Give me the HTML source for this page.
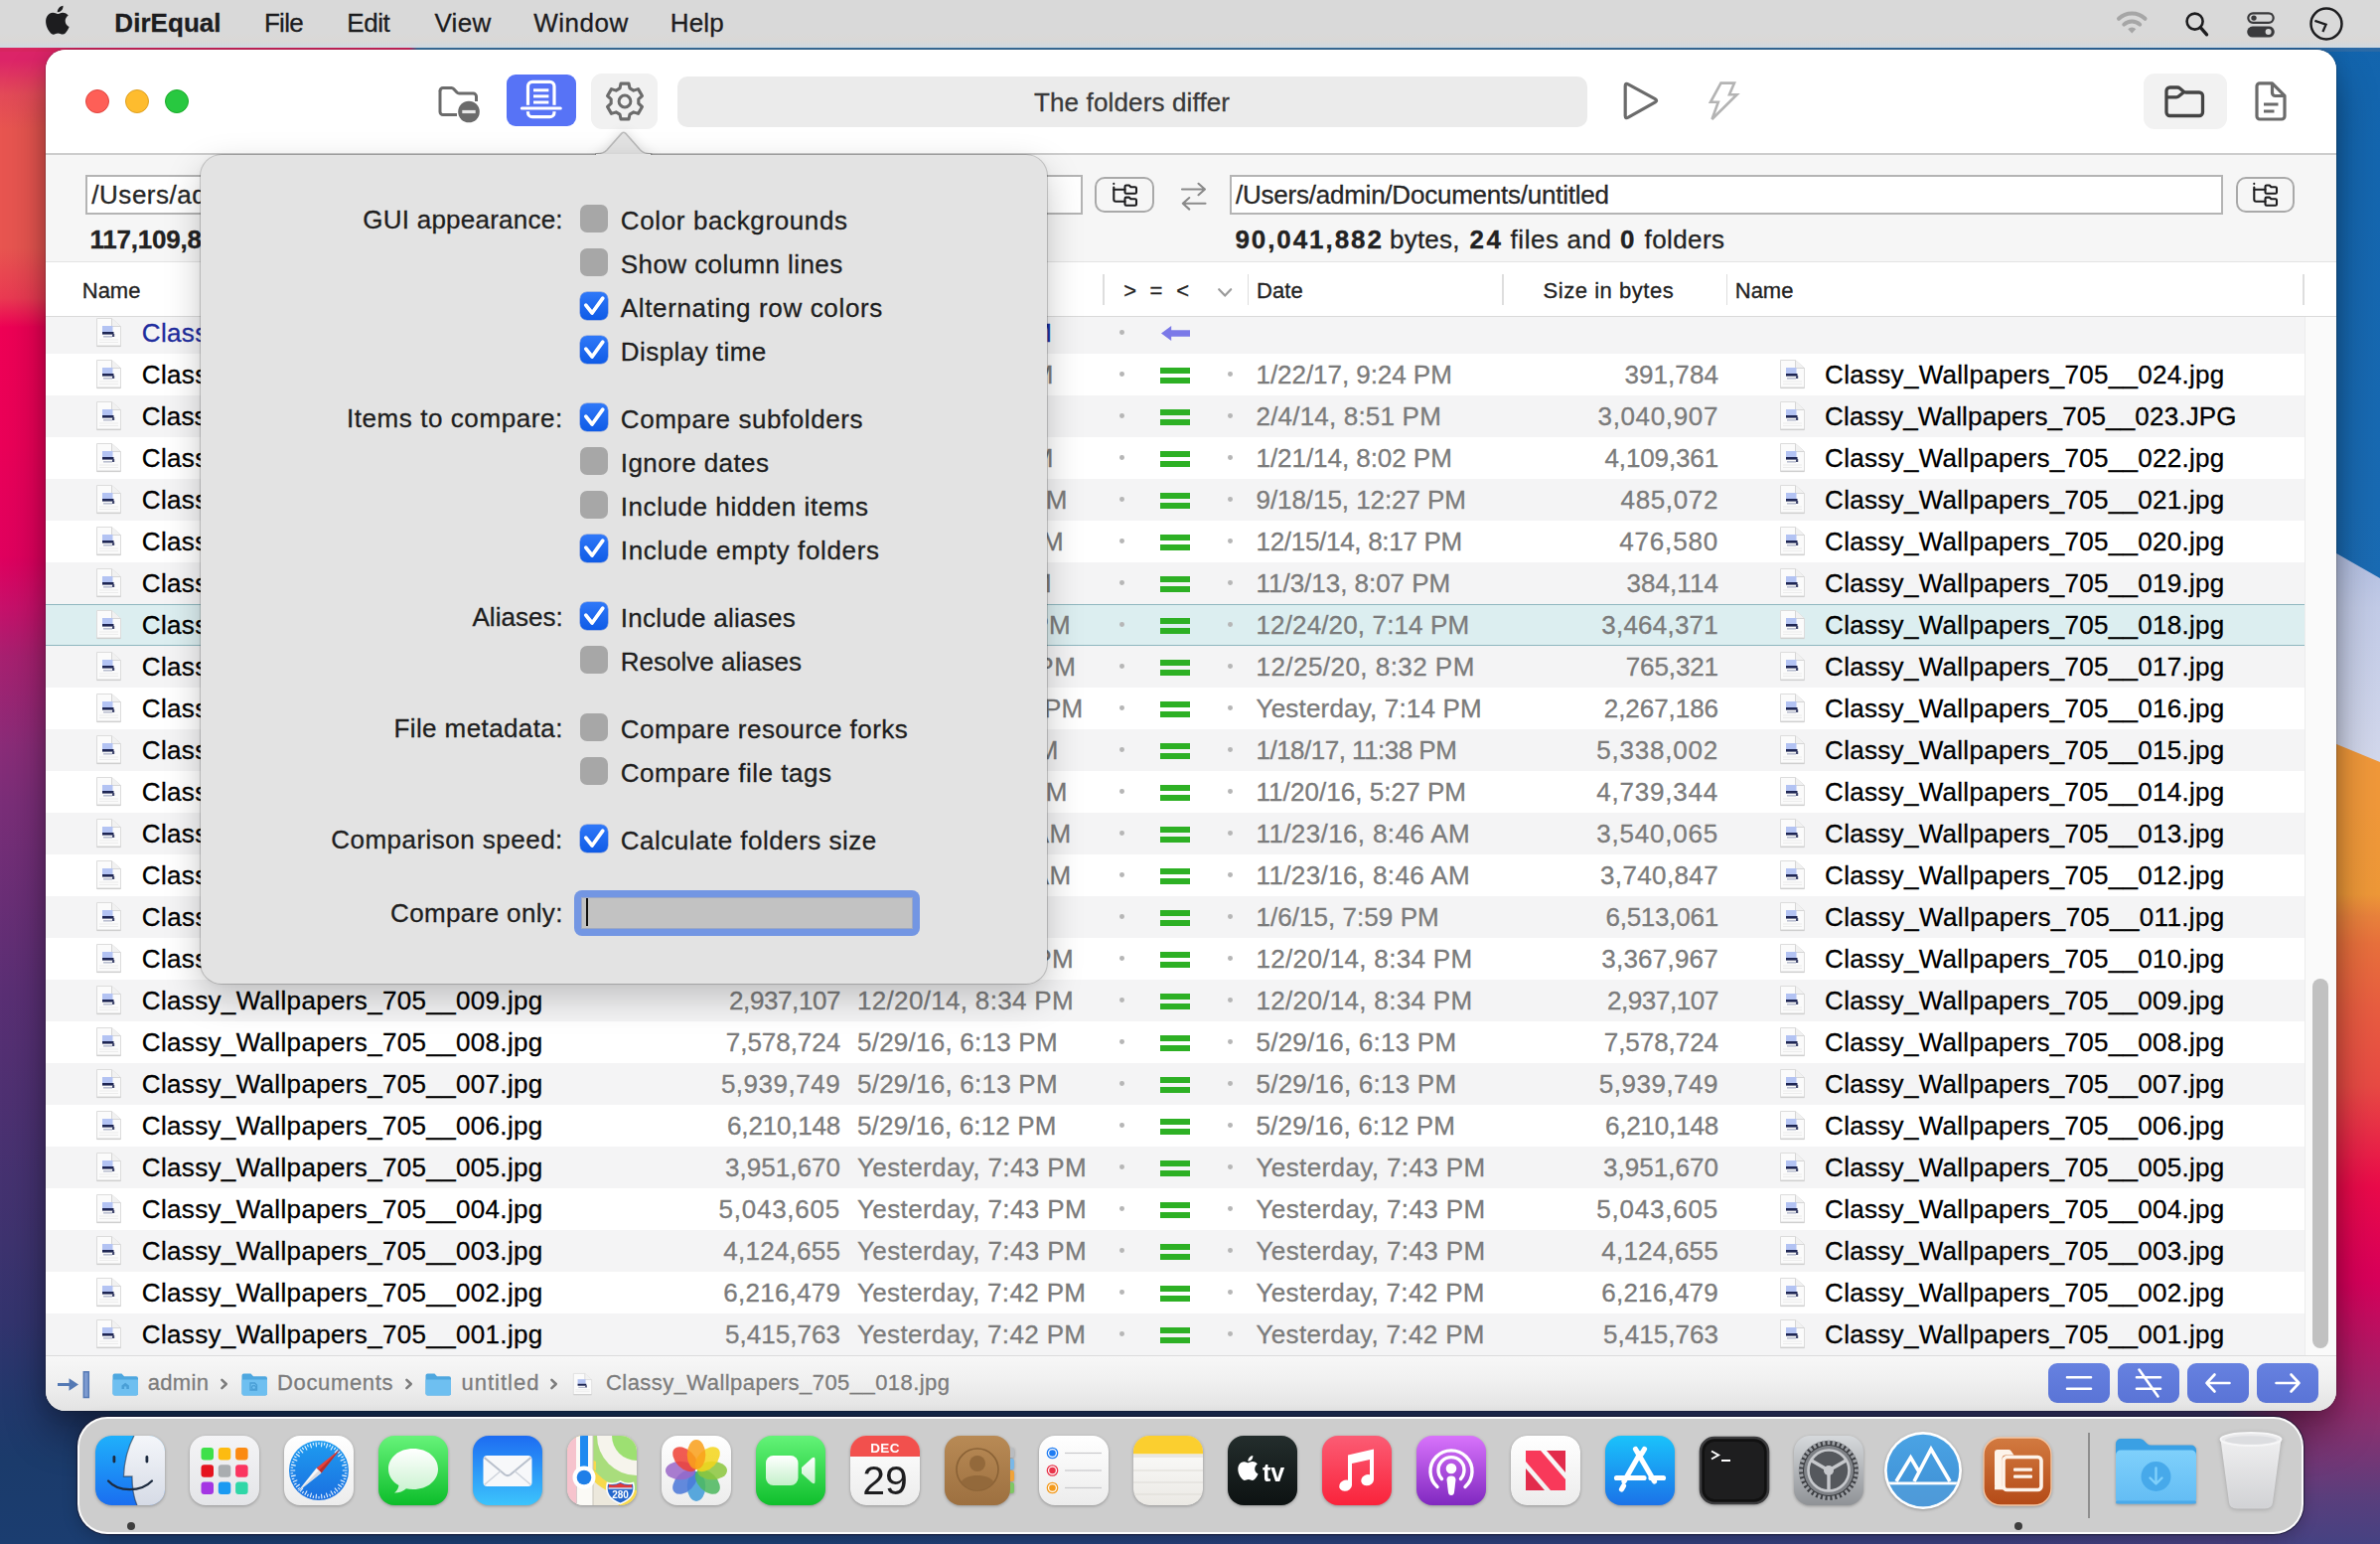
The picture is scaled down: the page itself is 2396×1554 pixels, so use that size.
<!DOCTYPE html><html><head><meta charset="utf-8"><title>DirEqual</title><style>
html,body{margin:0;padding:0}
body{width:2396px;height:1554px;overflow:hidden;position:relative;background:#1d3c6e;font-family:"Liberation Sans",sans-serif;}
.a{position:absolute;box-sizing:border-box}
.t{position:absolute;white-space:pre;font-family:"Liberation Sans",sans-serif;-webkit-text-stroke:0.3px currentColor}
svg{overflow:visible}
</style></head><body><div class="a" style="left:0px;top:1380px;width:2396px;height:174px;background:linear-gradient(90deg,#1b3a6b 0%,#1c3f73 30%,#2a3e78 60%,#3a3e7c 82%,#4a3f7e 96%,#4a4080 100%);"></div><div class="a" style="left:0px;top:0px;width:110px;height:1554px;background:linear-gradient(180deg,#dc2468 0px,#dc2468 60px,#e34a58 95px,#e85550 130px,#e85550 250px,#ea3a52 300px,#ee0055 330px,#ea0058 450px,#e0005e 560px,#c8106a 610px,#a82070 660px,#8a2c78 750px,#7a2e78 810px,#5a2f74 1000px,#3e336f 1250px,#33346e 1330px,#22386c 1410px,#1b3b6b 1470px,#1b3d70 1554px);"></div><div class="a" style="left:2240px;top:0px;width:156px;height:1554px;-webkit-mask-image:linear-gradient(90deg,transparent 0,#000 70px);mask-image:linear-gradient(90deg,transparent 0,#000 70px);background:linear-gradient(180deg,#f0983a 0px,#f0983a 810px,#ee9838 900px,#e9823c 922px,#e8703c 950px,#e85e40 1010px,#e84a44 1093px,#ea0a4a 1195px,#d8005a 1288px,#b01864 1361px,#8a3070 1434px,#5a3e7c 1507px,#454282 1554px);"></div><svg class="a" style="left:2240px;top:0px;-webkit-mask-image:linear-gradient(90deg,transparent 0,#000 70px);mask-image:linear-gradient(90deg,transparent 0,#000 70px);" width="156" height="800" viewBox="0 0 156 800"><defs><linearGradient id="gWB" x1="0" y1="0" x2="0" y2="1"><stop offset="0" stop-color="#1264ad"/><stop offset="1" stop-color="#1a6bb3"/></linearGradient><linearGradient id="gWP" x1="0" y1="0" x2="0" y2="1"><stop offset="0" stop-color="#9fb0db"/><stop offset=".45" stop-color="#c2cbe7"/><stop offset="1" stop-color="#d3d8ec"/></linearGradient></defs><polygon points="0,703 156,767 156,575 0,486" fill="url(#gWP)"/><polygon points="0,0 156,0 156,582 0,493" fill="url(#gWB)"/></svg><div class="a" style="left:0px;top:46px;width:2396px;height:6px;background:linear-gradient(90deg,#d82560 0px,#d82560 412px,#3f78a8 420px,#3f78a8 1500px,#2b6aa6 2396px);"></div><div class="a" id="win" style="left:46px;top:50px;width:2306px;height:1370px;border-radius:20px;background:#f6f6f6;box-shadow:0 0 0 1px rgba(0,0,0,.15),0 24px 44px -4px rgba(0,0,0,.45),0 0 18px rgba(0,0,0,.12);overflow:hidden"><div class="a" style="left:0px;top:0px;width:2306px;height:105.5px;background:#fff;border-bottom:2px solid #cdcdcd;"></div><div class="a" style="left:40px;top:40px;width:24px;height:24px;border-radius:50%;background:#fe5f57;border:1px solid #e0443e;"></div><div class="a" style="left:80px;top:40px;width:24px;height:24px;border-radius:50%;background:#febc2e;border:1px solid #dea123;"></div><div class="a" style="left:120px;top:40px;width:24px;height:24px;border-radius:50%;background:#28c840;border:1px solid #1aab29;"></div><svg class="a" style="left:394.5px;top:34.5px;" width="43" height="40" viewBox="0 0 43 40"><path d="M2 6.5 a3 3 0 0 1 3 -3 h8.5 a3 3 0 0 1 2.2 1 l3.3 3.6 a3 3 0 0 0 2.2 1 h14.3 a3 3 0 0 1 3 3 v5" fill="none" stroke="#6b6b6b" stroke-width="3"/><path d="M2 6 v21.5 a3 3 0 0 0 3 3 h14" fill="none" stroke="#6b6b6b" stroke-width="3"/><circle cx="31" cy="27.5" r="10.8" fill="#6b6b6b"/><rect x="24.3" y="25.9" width="13.4" height="3.2" fill="#e8e8e8"/></svg><div class="a" style="left:463.8px;top:25px;width:70px;height:51.6px;border-radius:9px;background:#5773f6;"></div><svg class="a" style="left:477.3px;top:30.2px;" width="44" height="40" viewBox="0 0 44 40"><rect x="8.5" y="2.3" width="26.5" height="35.4" rx="4.5" fill="none" stroke="#fff" stroke-width="3.2"/><rect x="14" y="9.3" width="15.4" height="3" fill="#fff"/><rect x="14" y="15.4" width="15.4" height="3" fill="#fff"/><rect x="14" y="21.5" width="15.4" height="3" fill="#fff"/><rect x="5" y="25.8" width="33.5" height="6.4" fill="#5773f6"/><rect x="0.8" y="27.6" width="42" height="3" rx="1.5" fill="#fff"/></svg><div class="a" style="left:548.5px;top:24px;width:67.3px;height:55.6px;border-radius:11px;background:#f1f1f1;"></div><svg class="a" style="left:560.5px;top:29.8px;" width="44" height="44" viewBox="0 0 44 44"><path d="M16.98 8.93 L18.04 4.13 L25.96 4.13 L27.02 8.93 L30.81 11.12 L35.49 9.64 L39.45 16.5 L35.83 19.81 L35.83 24.19 L39.45 27.5 L35.49 34.36 L30.81 32.88 L27.02 35.07 L25.96 39.87 L18.04 39.87 L16.98 35.07 L13.19 32.88 L8.51 34.36 L4.55 27.5 L8.17 24.19 L8.17 19.81 L4.55 16.5 L8.51 9.64 L13.19 11.12Z" fill="none" stroke="#6b6b6b" stroke-width="3.1" stroke-linejoin="round"/><circle cx="22" cy="22" r="5.9" fill="none" stroke="#6b6b6b" stroke-width="3"/></svg><div class="a" style="left:635.5px;top:26.6px;width:916.5px;height:51px;border-radius:10px;background:#ebebeb;"></div><div class="t" style="left:995px;top:34.99px;font-size:26px;line-height:36px;color:#3a3a3a;letter-spacing:0.14px;">The folders differ</div><svg class="a" style="left:1586.5px;top:32.2px;" width="40" height="40" viewBox="0 0 40 40"><path d="M3.2 4.5 Q3.2 1.2 6.2 2.8 L33.3 17.6 Q36 19.2 33.3 20.9 L6.2 36.2 Q3.2 37.8 3.2 34.5 Z" fill="none" stroke="#6b6b6b" stroke-width="3.2" stroke-linejoin="round"/></svg><svg class="a" style="left:1673.5px;top:31.5px;" width="31" height="40" viewBox="0 0 31 40"><path d="M12.5 1.6 H26 L21 13.3 H28.6 L3.5 38 L9.8 20.8 H2 Z" fill="none" stroke="#b4b4b4" stroke-width="2.6" stroke-linejoin="miter"/></svg><div class="a" style="left:2112px;top:24px;width:83.5px;height:55.6px;border-radius:11px;background:#f2f2f2;"></div><svg class="a" style="left:2133.3px;top:35.8px;" width="41" height="32" viewBox="0 0 41 32"><path d="M2 5.5 a3.5 3.5 0 0 1 3.5 -3.5 h7.5 a4 4 0 0 1 2.6 1 l3.5 3 a4 4 0 0 0 2.6 1 h13.3 a3.5 3.5 0 0 1 3.5 3.5 v16.5 a3.5 3.5 0 0 1 -3.5 3.5 h-29.5 a3.5 3.5 0 0 1 -3.5 -3.5 Z" fill="none" stroke="#444" stroke-width="3.3" stroke-linejoin="round"/><path d="M2 11.8 h10 a4 4 0 0 0 2.6 -1 l4.6 -3.8" fill="none" stroke="#444" stroke-width="3.3"/></svg><svg class="a" style="left:2223.8px;top:31.8px;" width="32" height="40" viewBox="0 0 32 40"><path d="M5 1.8 H17.5 L30 14.3 V35 a3 3 0 0 1 -3 3 H5 a3 3 0 0 1 -3 -3 V4.8 a3 3 0 0 1 3 -3 Z" fill="none" stroke="#6b6b6b" stroke-width="3.2" stroke-linejoin="round"/><path d="M17.5 2.5 V11.5 a3 3 0 0 0 3 3 H29.5" fill="none" stroke="#6b6b6b" stroke-width="3.2"/><path d="M9 23 H23.5 M9 30 H19.5" stroke="#6b6b6b" stroke-width="2.8"/></svg><div class="a" style="left:40.2px;top:126.2px;width:1003.4px;height:39.6px;background:#fff;border:2px solid #b4b4b4;"></div><div class="t" style="left:46.3px;top:127.59px;font-size:26px;line-height:36px;color:#262626;letter-spacing:0.529px;">/Users/admin/Documents</div><div class="a" style="left:1056px;top:128.2px;width:60px;height:35.7px;border-radius:10px;border:2px solid #a9a9a9;background:#f6f6f6;"></div><svg class="a" style="left:1073.5px;top:134.2px;" width="26" height="24" viewBox="0 0 26 24"><g fill="none" stroke="#1d1d1f" stroke-width="2.1" stroke-linejoin="round" stroke-linecap="round"><path d="M1.3 4.5 V16.8 Q1.3 18.8 3.3 18.8 H12.5"/><path d="M1.3 6.7 H12.5"/><path d="M1.3 0.7 V0.9"/><path d="M12.5 3.8 q0 -1.3 1.3 -1.3 h3 l1.6 1.7 h4.3 q1.3 0 1.3 1.3 v3.9 q0 1.3 -1.3 1.3 h-8.9 q-1.3 0 -1.3 -1.3 Z"/><path d="M12.5 15.9 q0 -1.3 1.3 -1.3 h3 l1.6 1.7 h4.3 q1.3 0 1.3 1.3 v3.9 q0 1.3 -1.3 1.3 h-8.9 q-1.3 0 -1.3 -1.3 Z"/></g></svg><svg class="a" style="left:1143.3px;top:134.2px;" width="26" height="28" viewBox="0 0 26 28"><g fill="none" stroke="#8a8a8a" stroke-width="2.1" stroke-linecap="round" stroke-linejoin="round"><path d="M1 6.5 H24 M17.5 0.8 L24 6.5 L17.5 12.2"/><path d="M24.5 20.8 H1.8 M8.3 15 L1.8 20.8 L8.3 26.6" /></g></svg><div class="a" style="left:1192.4px;top:126.2px;width:999.2px;height:39.6px;background:#fff;border:2px solid #b4b4b4;"></div><div class="t" style="left:1198px;top:127.59px;font-size:26px;line-height:36px;color:#262626;letter-spacing:-0.232px;">/Users/admin/Documents/untitled</div><div class="a" style="left:2204.5px;top:128.2px;width:59.5px;height:35.7px;border-radius:10px;border:2px solid #a9a9a9;background:#f6f6f6;"></div><svg class="a" style="left:2221.5px;top:134.2px;" width="26" height="24" viewBox="0 0 26 24"><g fill="none" stroke="#1d1d1f" stroke-width="2.1" stroke-linejoin="round" stroke-linecap="round"><path d="M1.3 4.5 V16.8 Q1.3 18.8 3.3 18.8 H12.5"/><path d="M1.3 6.7 H12.5"/><path d="M1.3 0.7 V0.9"/><path d="M12.5 3.8 q0 -1.3 1.3 -1.3 h3 l1.6 1.7 h4.3 q1.3 0 1.3 1.3 v3.9 q0 1.3 -1.3 1.3 h-8.9 q-1.3 0 -1.3 -1.3 Z"/><path d="M12.5 15.9 q0 -1.3 1.3 -1.3 h3 l1.6 1.7 h4.3 q1.3 0 1.3 1.3 v3.9 q0 1.3 -1.3 1.3 h-8.9 q-1.3 0 -1.3 -1.3 Z"/></g></svg><div class="t" style="left:1197.4px;top:173.29px;font-size:26px;line-height:36px;color:#222;font-weight:700;letter-spacing:1.93px;">90,041,882</div><div class="t" style="left:1353px;top:173.29px;font-size:26px;line-height:36px;color:#222;letter-spacing:0.227px;">bytes,</div><div class="t" style="left:1433.5px;top:173.29px;font-size:26px;line-height:36px;color:#222;font-weight:700;letter-spacing:2.579px;">24</div><div class="t" style="left:1474.5px;top:173.29px;font-size:26px;line-height:36px;color:#222;letter-spacing:0.582px;">files and</div><div class="t" style="left:1585px;top:173.29px;font-size:26px;line-height:36px;color:#222;font-weight:700;">0</div><div class="t" style="left:1609.5px;top:173.29px;font-size:26px;line-height:36px;color:#222;letter-spacing:0.41px;">folders</div><div class="t" style="left:44.5px;top:173.29px;font-size:26px;line-height:36px;color:#222;font-weight:700;letter-spacing:-0.216px;">117,109,845</div><div class="t" style="left:211px;top:173.29px;font-size:26px;line-height:36px;color:#222;letter-spacing:0.227px;">bytes,</div><div class="t" style="left:291.5px;top:173.29px;font-size:26px;line-height:36px;color:#222;font-weight:700;letter-spacing:2.579px;">25</div><div class="t" style="left:332.5px;top:173.29px;font-size:26px;line-height:36px;color:#222;letter-spacing:0.582px;">files and</div><div class="t" style="left:443px;top:173.29px;font-size:26px;line-height:36px;color:#222;font-weight:700;">0</div><div class="t" style="left:467.5px;top:173.29px;font-size:26px;line-height:36px;color:#222;letter-spacing:0.41px;">folders</div><div class="a" style="left:2274.4px;top:268px;width:32px;height:1046px;background:#fafafa;border-left:1px solid #ececec;"></div><div class="a" style="left:0px;top:264px;width:2274.4px;height:42px;background:#f4f4f5;"></div><svg class="a" style="left:51.3px;top:270px;" width="25" height="30" viewBox="0 0 25 30"><path d="M0.5 0.5 H15.5 L24.5 8.5 V28.5 H0.5 Z" fill="#fbfbfb" stroke="#dcdcdc" stroke-width="1"/><path d="M15.5 0.5 V8.5 H24.5" fill="#f1f1f1" stroke="#d6d6d6" stroke-width="1"/><rect x="0.5" y="27.6" width="24" height="1.5" fill="#cfcfcf"/><rect x="6" y="8" width="10.5" height="6" fill="#b3c3f3"/><rect x="6" y="14" width="11.5" height="2.6" fill="#1e2654"/><rect x="16" y="16" width="2.2" height="3" fill="#444a70"/><rect x="7" y="18" width="9" height="1.6" fill="#b9bed0"/><rect x="3" y="21.5" width="19" height="1" fill="#ececec"/><rect x="3" y="24" width="19" height="1" fill="#ececec"/></svg><div class="t" style="left:96.8px;top:266.69px;font-size:26px;line-height:36px;color:#1f2d9e;letter-spacing:0.34px;">Classy_Wallpapers_705__025.jpg</div><div class="t" style="left:665.67px;top:266.69px;font-size:26px;line-height:36px;color:#1f2d9e;letter-spacing:0.43px;">27,067,963</div><div class="t" style="left:817px;top:266.69px;font-size:26px;line-height:36px;color:#1f2d9e;letter-spacing:-0.135px;">1/14/21, 6:02 PM</div><div class="a" style="left:1080.9px;top:282.3px;width:4.8px;height:4.8px;border-radius:50%;background:#b6b6b6;"></div><svg class="a" style="left:1123.2px;top:278.4px;" width="29.2" height="15" viewBox="0 0 29.2 15"><path d="M0 7.5 L10.2 0 V4.2 H29 V10.8 H10.2 V15 Z" fill="#7b79e8"/></svg><div class="a" style="left:0px;top:306px;width:2274.4px;height:42px;background:#fff;"></div><svg class="a" style="left:51.3px;top:312px;" width="25" height="30" viewBox="0 0 25 30"><path d="M0.5 0.5 H15.5 L24.5 8.5 V28.5 H0.5 Z" fill="#fbfbfb" stroke="#dcdcdc" stroke-width="1"/><path d="M15.5 0.5 V8.5 H24.5" fill="#f1f1f1" stroke="#d6d6d6" stroke-width="1"/><rect x="0.5" y="27.6" width="24" height="1.5" fill="#cfcfcf"/><rect x="6" y="8" width="10.5" height="6" fill="#b3c3f3"/><rect x="6" y="14" width="11.5" height="2.6" fill="#1e2654"/><rect x="16" y="16" width="2.2" height="3" fill="#444a70"/><rect x="7" y="18" width="9" height="1.6" fill="#b9bed0"/><rect x="3" y="21.5" width="19" height="1" fill="#ececec"/><rect x="3" y="24" width="19" height="1" fill="#ececec"/></svg><div class="t" style="left:96.8px;top:308.69px;font-size:26px;line-height:36px;color:#000;letter-spacing:0.34px;">Classy_Wallpapers_705__024.jpg</div><div class="t" style="left:705.51px;top:308.69px;font-size:26px;line-height:36px;color:#7b7b7b;letter-spacing:0.086px;">391,784</div><div class="t" style="left:817px;top:308.69px;font-size:26px;line-height:36px;color:#7b7b7b;letter-spacing:-0.048px;">1/22/17, 9:24 PM</div><div class="a" style="left:1080.9px;top:324.3px;width:4.8px;height:4.8px;border-radius:50%;background:#b6b6b6;"></div><div class="a" style="left:1122px;top:319.6px;width:30.1px;height:6.3px;background:#2db024;"></div><div class="a" style="left:1122px;top:329.6px;width:30.1px;height:6.3px;background:#2db024;"></div><div class="a" style="left:1189.8px;top:324.3px;width:4.8px;height:4.8px;border-radius:50%;background:#b6b6b6;"></div><div class="t" style="left:1218.5px;top:308.69px;font-size:26px;line-height:36px;color:#7b7b7b;letter-spacing:-0.048px;">1/22/17, 9:24 PM</div><div class="t" style="left:1589.41px;top:308.69px;font-size:26px;line-height:36px;color:#7b7b7b;letter-spacing:0.086px;">391,784</div><svg class="a" style="left:1745.6px;top:312px;" width="25" height="30" viewBox="0 0 25 30"><path d="M0.5 0.5 H15.5 L24.5 8.5 V28.5 H0.5 Z" fill="#fbfbfb" stroke="#dcdcdc" stroke-width="1"/><path d="M15.5 0.5 V8.5 H24.5" fill="#f1f1f1" stroke="#d6d6d6" stroke-width="1"/><rect x="0.5" y="27.6" width="24" height="1.5" fill="#cfcfcf"/><rect x="6" y="8" width="10.5" height="6" fill="#b3c3f3"/><rect x="6" y="14" width="11.5" height="2.6" fill="#1e2654"/><rect x="16" y="16" width="2.2" height="3" fill="#444a70"/><rect x="7" y="18" width="9" height="1.6" fill="#b9bed0"/><rect x="3" y="21.5" width="19" height="1" fill="#ececec"/><rect x="3" y="24" width="19" height="1" fill="#ececec"/></svg><div class="t" style="left:1791.1px;top:308.69px;font-size:26px;line-height:36px;color:#000;letter-spacing:0.296px;">Classy_Wallpapers_705__024.jpg</div><div class="a" style="left:0px;top:348px;width:2274.4px;height:42px;background:#f4f4f5;"></div><svg class="a" style="left:51.3px;top:354px;" width="25" height="30" viewBox="0 0 25 30"><path d="M0.5 0.5 H15.5 L24.5 8.5 V28.5 H0.5 Z" fill="#fbfbfb" stroke="#dcdcdc" stroke-width="1"/><path d="M15.5 0.5 V8.5 H24.5" fill="#f1f1f1" stroke="#d6d6d6" stroke-width="1"/><rect x="0.5" y="27.6" width="24" height="1.5" fill="#cfcfcf"/><rect x="6" y="8" width="10.5" height="6" fill="#b3c3f3"/><rect x="6" y="14" width="11.5" height="2.6" fill="#1e2654"/><rect x="16" y="16" width="2.2" height="3" fill="#444a70"/><rect x="7" y="18" width="9" height="1.6" fill="#b9bed0"/><rect x="3" y="21.5" width="19" height="1" fill="#ececec"/><rect x="3" y="24" width="19" height="1" fill="#ececec"/></svg><div class="t" style="left:96.8px;top:350.69px;font-size:26px;line-height:36px;color:#000;letter-spacing:0.19px;">Classy_Wallpapers_705__023.JPG</div><div class="t" style="left:678.66px;top:350.69px;font-size:26px;line-height:36px;color:#7b7b7b;letter-spacing:0.641px;">3,040,907</div><div class="t" style="left:817px;top:350.69px;font-size:26px;line-height:36px;color:#7b7b7b;letter-spacing:0.195px;">2/4/14, 8:51 PM</div><div class="a" style="left:1080.9px;top:366.3px;width:4.8px;height:4.8px;border-radius:50%;background:#b6b6b6;"></div><div class="a" style="left:1122px;top:361.6px;width:30.1px;height:6.3px;background:#2db024;"></div><div class="a" style="left:1122px;top:371.6px;width:30.1px;height:6.3px;background:#2db024;"></div><div class="a" style="left:1189.8px;top:366.3px;width:4.8px;height:4.8px;border-radius:50%;background:#b6b6b6;"></div><div class="t" style="left:1218.5px;top:350.69px;font-size:26px;line-height:36px;color:#7b7b7b;letter-spacing:0.195px;">2/4/14, 8:51 PM</div><div class="t" style="left:1562.56px;top:350.69px;font-size:26px;line-height:36px;color:#7b7b7b;letter-spacing:0.641px;">3,040,907</div><svg class="a" style="left:1745.6px;top:354px;" width="25" height="30" viewBox="0 0 25 30"><path d="M0.5 0.5 H15.5 L24.5 8.5 V28.5 H0.5 Z" fill="#fbfbfb" stroke="#dcdcdc" stroke-width="1"/><path d="M15.5 0.5 V8.5 H24.5" fill="#f1f1f1" stroke="#d6d6d6" stroke-width="1"/><rect x="0.5" y="27.6" width="24" height="1.5" fill="#cfcfcf"/><rect x="6" y="8" width="10.5" height="6" fill="#b3c3f3"/><rect x="6" y="14" width="11.5" height="2.6" fill="#1e2654"/><rect x="16" y="16" width="2.2" height="3" fill="#444a70"/><rect x="7" y="18" width="9" height="1.6" fill="#b9bed0"/><rect x="3" y="21.5" width="19" height="1" fill="#ececec"/><rect x="3" y="24" width="19" height="1" fill="#ececec"/></svg><div class="t" style="left:1791.1px;top:350.69px;font-size:26px;line-height:36px;color:#000;letter-spacing:0.172px;">Classy_Wallpapers_705__023.JPG</div><div class="a" style="left:0px;top:390px;width:2274.4px;height:42px;background:#fff;"></div><svg class="a" style="left:51.3px;top:396px;" width="25" height="30" viewBox="0 0 25 30"><path d="M0.5 0.5 H15.5 L24.5 8.5 V28.5 H0.5 Z" fill="#fbfbfb" stroke="#dcdcdc" stroke-width="1"/><path d="M15.5 0.5 V8.5 H24.5" fill="#f1f1f1" stroke="#d6d6d6" stroke-width="1"/><rect x="0.5" y="27.6" width="24" height="1.5" fill="#cfcfcf"/><rect x="6" y="8" width="10.5" height="6" fill="#b3c3f3"/><rect x="6" y="14" width="11.5" height="2.6" fill="#1e2654"/><rect x="16" y="16" width="2.2" height="3" fill="#444a70"/><rect x="7" y="18" width="9" height="1.6" fill="#b9bed0"/><rect x="3" y="21.5" width="19" height="1" fill="#ececec"/><rect x="3" y="24" width="19" height="1" fill="#ececec"/></svg><div class="t" style="left:96.8px;top:392.69px;font-size:26px;line-height:36px;color:#000;letter-spacing:0.34px;">Classy_Wallpapers_705__022.jpg</div><div class="t" style="left:685.63px;top:392.69px;font-size:26px;line-height:36px;color:#7b7b7b;letter-spacing:-0.134px;">4,109,361</div><div class="t" style="left:817px;top:392.69px;font-size:26px;line-height:36px;color:#7b7b7b;letter-spacing:-0.048px;">1/21/14, 8:02 PM</div><div class="a" style="left:1080.9px;top:408.3px;width:4.8px;height:4.8px;border-radius:50%;background:#b6b6b6;"></div><div class="a" style="left:1122px;top:403.6px;width:30.1px;height:6.3px;background:#2db024;"></div><div class="a" style="left:1122px;top:413.6px;width:30.1px;height:6.3px;background:#2db024;"></div><div class="a" style="left:1189.8px;top:408.3px;width:4.8px;height:4.8px;border-radius:50%;background:#b6b6b6;"></div><div class="t" style="left:1218.5px;top:392.69px;font-size:26px;line-height:36px;color:#7b7b7b;letter-spacing:-0.048px;">1/21/14, 8:02 PM</div><div class="t" style="left:1569.53px;top:392.69px;font-size:26px;line-height:36px;color:#7b7b7b;letter-spacing:-0.134px;">4,109,361</div><svg class="a" style="left:1745.6px;top:396px;" width="25" height="30" viewBox="0 0 25 30"><path d="M0.5 0.5 H15.5 L24.5 8.5 V28.5 H0.5 Z" fill="#fbfbfb" stroke="#dcdcdc" stroke-width="1"/><path d="M15.5 0.5 V8.5 H24.5" fill="#f1f1f1" stroke="#d6d6d6" stroke-width="1"/><rect x="0.5" y="27.6" width="24" height="1.5" fill="#cfcfcf"/><rect x="6" y="8" width="10.5" height="6" fill="#b3c3f3"/><rect x="6" y="14" width="11.5" height="2.6" fill="#1e2654"/><rect x="16" y="16" width="2.2" height="3" fill="#444a70"/><rect x="7" y="18" width="9" height="1.6" fill="#b9bed0"/><rect x="3" y="21.5" width="19" height="1" fill="#ececec"/><rect x="3" y="24" width="19" height="1" fill="#ececec"/></svg><div class="t" style="left:1791.1px;top:392.69px;font-size:26px;line-height:36px;color:#000;letter-spacing:0.296px;">Classy_Wallpapers_705__022.jpg</div><div class="a" style="left:0px;top:432px;width:2274.4px;height:42px;background:#f4f4f5;"></div><svg class="a" style="left:51.3px;top:438px;" width="25" height="30" viewBox="0 0 25 30"><path d="M0.5 0.5 H15.5 L24.5 8.5 V28.5 H0.5 Z" fill="#fbfbfb" stroke="#dcdcdc" stroke-width="1"/><path d="M15.5 0.5 V8.5 H24.5" fill="#f1f1f1" stroke="#d6d6d6" stroke-width="1"/><rect x="0.5" y="27.6" width="24" height="1.5" fill="#cfcfcf"/><rect x="6" y="8" width="10.5" height="6" fill="#b3c3f3"/><rect x="6" y="14" width="11.5" height="2.6" fill="#1e2654"/><rect x="16" y="16" width="2.2" height="3" fill="#444a70"/><rect x="7" y="18" width="9" height="1.6" fill="#b9bed0"/><rect x="3" y="21.5" width="19" height="1" fill="#ececec"/><rect x="3" y="24" width="19" height="1" fill="#ececec"/></svg><div class="t" style="left:96.8px;top:434.69px;font-size:26px;line-height:36px;color:#000;letter-spacing:0.34px;">Classy_Wallpapers_705__021.jpg</div><div class="t" style="left:701.66px;top:434.69px;font-size:26px;line-height:36px;color:#7b7b7b;letter-spacing:0.636px;">485,072</div><div class="t" style="left:817px;top:434.69px;font-size:26px;line-height:36px;color:#7b7b7b;letter-spacing:-0.062px;">9/18/15, 12:27 PM</div><div class="a" style="left:1080.9px;top:450.3px;width:4.8px;height:4.8px;border-radius:50%;background:#b6b6b6;"></div><div class="a" style="left:1122px;top:445.6px;width:30.1px;height:6.3px;background:#2db024;"></div><div class="a" style="left:1122px;top:455.6px;width:30.1px;height:6.3px;background:#2db024;"></div><div class="a" style="left:1189.8px;top:450.3px;width:4.8px;height:4.8px;border-radius:50%;background:#b6b6b6;"></div><div class="t" style="left:1218.5px;top:434.69px;font-size:26px;line-height:36px;color:#7b7b7b;letter-spacing:-0.062px;">9/18/15, 12:27 PM</div><div class="t" style="left:1585.56px;top:434.69px;font-size:26px;line-height:36px;color:#7b7b7b;letter-spacing:0.636px;">485,072</div><svg class="a" style="left:1745.6px;top:438px;" width="25" height="30" viewBox="0 0 25 30"><path d="M0.5 0.5 H15.5 L24.5 8.5 V28.5 H0.5 Z" fill="#fbfbfb" stroke="#dcdcdc" stroke-width="1"/><path d="M15.5 0.5 V8.5 H24.5" fill="#f1f1f1" stroke="#d6d6d6" stroke-width="1"/><rect x="0.5" y="27.6" width="24" height="1.5" fill="#cfcfcf"/><rect x="6" y="8" width="10.5" height="6" fill="#b3c3f3"/><rect x="6" y="14" width="11.5" height="2.6" fill="#1e2654"/><rect x="16" y="16" width="2.2" height="3" fill="#444a70"/><rect x="7" y="18" width="9" height="1.6" fill="#b9bed0"/><rect x="3" y="21.5" width="19" height="1" fill="#ececec"/><rect x="3" y="24" width="19" height="1" fill="#ececec"/></svg><div class="t" style="left:1791.1px;top:434.69px;font-size:26px;line-height:36px;color:#000;letter-spacing:0.296px;">Classy_Wallpapers_705__021.jpg</div><div class="a" style="left:0px;top:474px;width:2274.4px;height:42px;background:#fff;"></div><svg class="a" style="left:51.3px;top:480px;" width="25" height="30" viewBox="0 0 25 30"><path d="M0.5 0.5 H15.5 L24.5 8.5 V28.5 H0.5 Z" fill="#fbfbfb" stroke="#dcdcdc" stroke-width="1"/><path d="M15.5 0.5 V8.5 H24.5" fill="#f1f1f1" stroke="#d6d6d6" stroke-width="1"/><rect x="0.5" y="27.6" width="24" height="1.5" fill="#cfcfcf"/><rect x="6" y="8" width="10.5" height="6" fill="#b3c3f3"/><rect x="6" y="14" width="11.5" height="2.6" fill="#1e2654"/><rect x="16" y="16" width="2.2" height="3" fill="#444a70"/><rect x="7" y="18" width="9" height="1.6" fill="#b9bed0"/><rect x="3" y="21.5" width="19" height="1" fill="#ececec"/><rect x="3" y="24" width="19" height="1" fill="#ececec"/></svg><div class="t" style="left:96.8px;top:476.69px;font-size:26px;line-height:36px;color:#000;letter-spacing:0.34px;">Classy_Wallpapers_705__020.jpg</div><div class="t" style="left:700.38px;top:476.69px;font-size:26px;line-height:36px;color:#7b7b7b;letter-spacing:0.819px;">476,580</div><div class="t" style="left:817px;top:476.69px;font-size:26px;line-height:36px;color:#7b7b7b;letter-spacing:-0.299px;">12/15/14, 8:17 PM</div><div class="a" style="left:1080.9px;top:492.3px;width:4.8px;height:4.8px;border-radius:50%;background:#b6b6b6;"></div><div class="a" style="left:1122px;top:487.6px;width:30.1px;height:6.3px;background:#2db024;"></div><div class="a" style="left:1122px;top:497.6px;width:30.1px;height:6.3px;background:#2db024;"></div><div class="a" style="left:1189.8px;top:492.3px;width:4.8px;height:4.8px;border-radius:50%;background:#b6b6b6;"></div><div class="t" style="left:1218.5px;top:476.69px;font-size:26px;line-height:36px;color:#7b7b7b;letter-spacing:-0.299px;">12/15/14, 8:17 PM</div><div class="t" style="left:1584.28px;top:476.69px;font-size:26px;line-height:36px;color:#7b7b7b;letter-spacing:0.819px;">476,580</div><svg class="a" style="left:1745.6px;top:480px;" width="25" height="30" viewBox="0 0 25 30"><path d="M0.5 0.5 H15.5 L24.5 8.5 V28.5 H0.5 Z" fill="#fbfbfb" stroke="#dcdcdc" stroke-width="1"/><path d="M15.5 0.5 V8.5 H24.5" fill="#f1f1f1" stroke="#d6d6d6" stroke-width="1"/><rect x="0.5" y="27.6" width="24" height="1.5" fill="#cfcfcf"/><rect x="6" y="8" width="10.5" height="6" fill="#b3c3f3"/><rect x="6" y="14" width="11.5" height="2.6" fill="#1e2654"/><rect x="16" y="16" width="2.2" height="3" fill="#444a70"/><rect x="7" y="18" width="9" height="1.6" fill="#b9bed0"/><rect x="3" y="21.5" width="19" height="1" fill="#ececec"/><rect x="3" y="24" width="19" height="1" fill="#ececec"/></svg><div class="t" style="left:1791.1px;top:476.69px;font-size:26px;line-height:36px;color:#000;letter-spacing:0.296px;">Classy_Wallpapers_705__020.jpg</div><div class="a" style="left:0px;top:516px;width:2274.4px;height:42px;background:#f4f4f5;"></div><svg class="a" style="left:51.3px;top:522px;" width="25" height="30" viewBox="0 0 25 30"><path d="M0.5 0.5 H15.5 L24.5 8.5 V28.5 H0.5 Z" fill="#fbfbfb" stroke="#dcdcdc" stroke-width="1"/><path d="M15.5 0.5 V8.5 H24.5" fill="#f1f1f1" stroke="#d6d6d6" stroke-width="1"/><rect x="0.5" y="27.6" width="24" height="1.5" fill="#cfcfcf"/><rect x="6" y="8" width="10.5" height="6" fill="#b3c3f3"/><rect x="6" y="14" width="11.5" height="2.6" fill="#1e2654"/><rect x="16" y="16" width="2.2" height="3" fill="#444a70"/><rect x="7" y="18" width="9" height="1.6" fill="#b9bed0"/><rect x="3" y="21.5" width="19" height="1" fill="#ececec"/><rect x="3" y="24" width="19" height="1" fill="#ececec"/></svg><div class="t" style="left:96.8px;top:518.69px;font-size:26px;line-height:36px;color:#000;letter-spacing:0.34px;">Classy_Wallpapers_705__019.jpg</div><div class="t" style="left:707.64px;top:518.69px;font-size:26px;line-height:36px;color:#7b7b7b;letter-spacing:0.057px;">384,114</div><div class="t" style="left:817px;top:518.69px;font-size:26px;line-height:36px;color:#7b7b7b;letter-spacing:-0.026px;">11/3/13, 8:07 PM</div><div class="a" style="left:1080.9px;top:534.3px;width:4.8px;height:4.8px;border-radius:50%;background:#b6b6b6;"></div><div class="a" style="left:1122px;top:529.6px;width:30.1px;height:6.3px;background:#2db024;"></div><div class="a" style="left:1122px;top:539.6px;width:30.1px;height:6.3px;background:#2db024;"></div><div class="a" style="left:1189.8px;top:534.3px;width:4.8px;height:4.8px;border-radius:50%;background:#b6b6b6;"></div><div class="t" style="left:1218.5px;top:518.69px;font-size:26px;line-height:36px;color:#7b7b7b;letter-spacing:-0.026px;">11/3/13, 8:07 PM</div><div class="t" style="left:1591.54px;top:518.69px;font-size:26px;line-height:36px;color:#7b7b7b;letter-spacing:0.057px;">384,114</div><svg class="a" style="left:1745.6px;top:522px;" width="25" height="30" viewBox="0 0 25 30"><path d="M0.5 0.5 H15.5 L24.5 8.5 V28.5 H0.5 Z" fill="#fbfbfb" stroke="#dcdcdc" stroke-width="1"/><path d="M15.5 0.5 V8.5 H24.5" fill="#f1f1f1" stroke="#d6d6d6" stroke-width="1"/><rect x="0.5" y="27.6" width="24" height="1.5" fill="#cfcfcf"/><rect x="6" y="8" width="10.5" height="6" fill="#b3c3f3"/><rect x="6" y="14" width="11.5" height="2.6" fill="#1e2654"/><rect x="16" y="16" width="2.2" height="3" fill="#444a70"/><rect x="7" y="18" width="9" height="1.6" fill="#b9bed0"/><rect x="3" y="21.5" width="19" height="1" fill="#ececec"/><rect x="3" y="24" width="19" height="1" fill="#ececec"/></svg><div class="t" style="left:1791.1px;top:518.69px;font-size:26px;line-height:36px;color:#000;letter-spacing:0.296px;">Classy_Wallpapers_705__019.jpg</div><div class="a" style="left:0px;top:558px;width:2274.4px;height:42px;background:#dceef0;border-top:1.5px solid #8fb7bf;border-bottom:1.5px solid #8fb7bf;"></div><svg class="a" style="left:51.3px;top:564px;" width="25" height="30" viewBox="0 0 25 30"><path d="M0.5 0.5 H15.5 L24.5 8.5 V28.5 H0.5 Z" fill="#fbfbfb" stroke="#dcdcdc" stroke-width="1"/><path d="M15.5 0.5 V8.5 H24.5" fill="#f1f1f1" stroke="#d6d6d6" stroke-width="1"/><rect x="0.5" y="27.6" width="24" height="1.5" fill="#cfcfcf"/><rect x="6" y="8" width="10.5" height="6" fill="#b3c3f3"/><rect x="6" y="14" width="11.5" height="2.6" fill="#1e2654"/><rect x="16" y="16" width="2.2" height="3" fill="#444a70"/><rect x="7" y="18" width="9" height="1.6" fill="#b9bed0"/><rect x="3" y="21.5" width="19" height="1" fill="#ececec"/><rect x="3" y="24" width="19" height="1" fill="#ececec"/></svg><div class="t" style="left:96.8px;top:560.69px;font-size:26px;line-height:36px;color:#000;letter-spacing:0.34px;">Classy_Wallpapers_705__018.jpg</div><div class="t" style="left:682.37px;top:560.69px;font-size:26px;line-height:36px;color:#7b7b7b;letter-spacing:0.229px;">3,464,371</div><div class="t" style="left:817px;top:560.69px;font-size:26px;line-height:36px;color:#7b7b7b;letter-spacing:0.138px;">12/24/20, 7:14 PM</div><div class="a" style="left:1080.9px;top:576.3px;width:4.8px;height:4.8px;border-radius:50%;background:#b6b6b6;"></div><div class="a" style="left:1122px;top:571.6px;width:30.1px;height:6.3px;background:#2db024;"></div><div class="a" style="left:1122px;top:581.6px;width:30.1px;height:6.3px;background:#2db024;"></div><div class="a" style="left:1189.8px;top:576.3px;width:4.8px;height:4.8px;border-radius:50%;background:#b6b6b6;"></div><div class="t" style="left:1218.5px;top:560.69px;font-size:26px;line-height:36px;color:#7b7b7b;letter-spacing:0.138px;">12/24/20, 7:14 PM</div><div class="t" style="left:1566.27px;top:560.69px;font-size:26px;line-height:36px;color:#7b7b7b;letter-spacing:0.229px;">3,464,371</div><svg class="a" style="left:1745.6px;top:564px;" width="25" height="30" viewBox="0 0 25 30"><path d="M0.5 0.5 H15.5 L24.5 8.5 V28.5 H0.5 Z" fill="#fbfbfb" stroke="#dcdcdc" stroke-width="1"/><path d="M15.5 0.5 V8.5 H24.5" fill="#f1f1f1" stroke="#d6d6d6" stroke-width="1"/><rect x="0.5" y="27.6" width="24" height="1.5" fill="#cfcfcf"/><rect x="6" y="8" width="10.5" height="6" fill="#b3c3f3"/><rect x="6" y="14" width="11.5" height="2.6" fill="#1e2654"/><rect x="16" y="16" width="2.2" height="3" fill="#444a70"/><rect x="7" y="18" width="9" height="1.6" fill="#b9bed0"/><rect x="3" y="21.5" width="19" height="1" fill="#ececec"/><rect x="3" y="24" width="19" height="1" fill="#ececec"/></svg><div class="t" style="left:1791.1px;top:560.69px;font-size:26px;line-height:36px;color:#000;letter-spacing:0.296px;">Classy_Wallpapers_705__018.jpg</div><div class="a" style="left:0px;top:600px;width:2274.4px;height:42px;background:#f4f4f5;"></div><svg class="a" style="left:51.3px;top:606px;" width="25" height="30" viewBox="0 0 25 30"><path d="M0.5 0.5 H15.5 L24.5 8.5 V28.5 H0.5 Z" fill="#fbfbfb" stroke="#dcdcdc" stroke-width="1"/><path d="M15.5 0.5 V8.5 H24.5" fill="#f1f1f1" stroke="#d6d6d6" stroke-width="1"/><rect x="0.5" y="27.6" width="24" height="1.5" fill="#cfcfcf"/><rect x="6" y="8" width="10.5" height="6" fill="#b3c3f3"/><rect x="6" y="14" width="11.5" height="2.6" fill="#1e2654"/><rect x="16" y="16" width="2.2" height="3" fill="#444a70"/><rect x="7" y="18" width="9" height="1.6" fill="#b9bed0"/><rect x="3" y="21.5" width="19" height="1" fill="#ececec"/><rect x="3" y="24" width="19" height="1" fill="#ececec"/></svg><div class="t" style="left:96.8px;top:602.69px;font-size:26px;line-height:36px;color:#000;letter-spacing:0.34px;">Classy_Wallpapers_705__017.jpg</div><div class="t" style="left:706.8px;top:602.69px;font-size:26px;line-height:36px;color:#7b7b7b;letter-spacing:-0.098px;">765,321</div><div class="t" style="left:817px;top:602.69px;font-size:26px;line-height:36px;color:#7b7b7b;letter-spacing:0.457px;">12/25/20, 8:32 PM</div><div class="a" style="left:1080.9px;top:618.3px;width:4.8px;height:4.8px;border-radius:50%;background:#b6b6b6;"></div><div class="a" style="left:1122px;top:613.6px;width:30.1px;height:6.3px;background:#2db024;"></div><div class="a" style="left:1122px;top:623.6px;width:30.1px;height:6.3px;background:#2db024;"></div><div class="a" style="left:1189.8px;top:618.3px;width:4.8px;height:4.8px;border-radius:50%;background:#b6b6b6;"></div><div class="t" style="left:1218.5px;top:602.69px;font-size:26px;line-height:36px;color:#7b7b7b;letter-spacing:0.457px;">12/25/20, 8:32 PM</div><div class="t" style="left:1590.7px;top:602.69px;font-size:26px;line-height:36px;color:#7b7b7b;letter-spacing:-0.098px;">765,321</div><svg class="a" style="left:1745.6px;top:606px;" width="25" height="30" viewBox="0 0 25 30"><path d="M0.5 0.5 H15.5 L24.5 8.5 V28.5 H0.5 Z" fill="#fbfbfb" stroke="#dcdcdc" stroke-width="1"/><path d="M15.5 0.5 V8.5 H24.5" fill="#f1f1f1" stroke="#d6d6d6" stroke-width="1"/><rect x="0.5" y="27.6" width="24" height="1.5" fill="#cfcfcf"/><rect x="6" y="8" width="10.5" height="6" fill="#b3c3f3"/><rect x="6" y="14" width="11.5" height="2.6" fill="#1e2654"/><rect x="16" y="16" width="2.2" height="3" fill="#444a70"/><rect x="7" y="18" width="9" height="1.6" fill="#b9bed0"/><rect x="3" y="21.5" width="19" height="1" fill="#ececec"/><rect x="3" y="24" width="19" height="1" fill="#ececec"/></svg><div class="t" style="left:1791.1px;top:602.69px;font-size:26px;line-height:36px;color:#000;letter-spacing:0.296px;">Classy_Wallpapers_705__017.jpg</div><div class="a" style="left:0px;top:642px;width:2274.4px;height:42px;background:#fff;"></div><svg class="a" style="left:51.3px;top:648px;" width="25" height="30" viewBox="0 0 25 30"><path d="M0.5 0.5 H15.5 L24.5 8.5 V28.5 H0.5 Z" fill="#fbfbfb" stroke="#dcdcdc" stroke-width="1"/><path d="M15.5 0.5 V8.5 H24.5" fill="#f1f1f1" stroke="#d6d6d6" stroke-width="1"/><rect x="0.5" y="27.6" width="24" height="1.5" fill="#cfcfcf"/><rect x="6" y="8" width="10.5" height="6" fill="#b3c3f3"/><rect x="6" y="14" width="11.5" height="2.6" fill="#1e2654"/><rect x="16" y="16" width="2.2" height="3" fill="#444a70"/><rect x="7" y="18" width="9" height="1.6" fill="#b9bed0"/><rect x="3" y="21.5" width="19" height="1" fill="#ececec"/><rect x="3" y="24" width="19" height="1" fill="#ececec"/></svg><div class="t" style="left:96.8px;top:644.69px;font-size:26px;line-height:36px;color:#000;letter-spacing:0.34px;">Classy_Wallpapers_705__016.jpg</div><div class="t" style="left:684.85px;top:644.69px;font-size:26px;line-height:36px;color:#7b7b7b;letter-spacing:-0.046px;">2,267,186</div><div class="t" style="left:817px;top:644.69px;font-size:26px;line-height:36px;color:#7b7b7b;letter-spacing:0.187px;">Yesterday, 7:14 PM</div><div class="a" style="left:1080.9px;top:660.3px;width:4.8px;height:4.8px;border-radius:50%;background:#b6b6b6;"></div><div class="a" style="left:1122px;top:655.6px;width:30.1px;height:6.3px;background:#2db024;"></div><div class="a" style="left:1122px;top:665.6px;width:30.1px;height:6.3px;background:#2db024;"></div><div class="a" style="left:1189.8px;top:660.3px;width:4.8px;height:4.8px;border-radius:50%;background:#b6b6b6;"></div><div class="t" style="left:1218.5px;top:644.69px;font-size:26px;line-height:36px;color:#7b7b7b;letter-spacing:0.187px;">Yesterday, 7:14 PM</div><div class="t" style="left:1568.75px;top:644.69px;font-size:26px;line-height:36px;color:#7b7b7b;letter-spacing:-0.046px;">2,267,186</div><svg class="a" style="left:1745.6px;top:648px;" width="25" height="30" viewBox="0 0 25 30"><path d="M0.5 0.5 H15.5 L24.5 8.5 V28.5 H0.5 Z" fill="#fbfbfb" stroke="#dcdcdc" stroke-width="1"/><path d="M15.5 0.5 V8.5 H24.5" fill="#f1f1f1" stroke="#d6d6d6" stroke-width="1"/><rect x="0.5" y="27.6" width="24" height="1.5" fill="#cfcfcf"/><rect x="6" y="8" width="10.5" height="6" fill="#b3c3f3"/><rect x="6" y="14" width="11.5" height="2.6" fill="#1e2654"/><rect x="16" y="16" width="2.2" height="3" fill="#444a70"/><rect x="7" y="18" width="9" height="1.6" fill="#b9bed0"/><rect x="3" y="21.5" width="19" height="1" fill="#ececec"/><rect x="3" y="24" width="19" height="1" fill="#ececec"/></svg><div class="t" style="left:1791.1px;top:644.69px;font-size:26px;line-height:36px;color:#000;letter-spacing:0.296px;">Classy_Wallpapers_705__016.jpg</div><div class="a" style="left:0px;top:684px;width:2274.4px;height:42px;background:#f4f4f5;"></div><svg class="a" style="left:51.3px;top:690px;" width="25" height="30" viewBox="0 0 25 30"><path d="M0.5 0.5 H15.5 L24.5 8.5 V28.5 H0.5 Z" fill="#fbfbfb" stroke="#dcdcdc" stroke-width="1"/><path d="M15.5 0.5 V8.5 H24.5" fill="#f1f1f1" stroke="#d6d6d6" stroke-width="1"/><rect x="0.5" y="27.6" width="24" height="1.5" fill="#cfcfcf"/><rect x="6" y="8" width="10.5" height="6" fill="#b3c3f3"/><rect x="6" y="14" width="11.5" height="2.6" fill="#1e2654"/><rect x="16" y="16" width="2.2" height="3" fill="#444a70"/><rect x="7" y="18" width="9" height="1.6" fill="#b9bed0"/><rect x="3" y="21.5" width="19" height="1" fill="#ececec"/><rect x="3" y="24" width="19" height="1" fill="#ececec"/></svg><div class="t" style="left:96.8px;top:686.69px;font-size:26px;line-height:36px;color:#000;letter-spacing:0.34px;">Classy_Wallpapers_705__015.jpg</div><div class="t" style="left:677.42px;top:686.69px;font-size:26px;line-height:36px;color:#7b7b7b;letter-spacing:0.779px;">5,338,002</div><div class="t" style="left:817px;top:686.69px;font-size:26px;line-height:36px;color:#7b7b7b;letter-spacing:-0.516px;">1/18/17, 11:38 PM</div><div class="a" style="left:1080.9px;top:702.3px;width:4.8px;height:4.8px;border-radius:50%;background:#b6b6b6;"></div><div class="a" style="left:1122px;top:697.6px;width:30.1px;height:6.3px;background:#2db024;"></div><div class="a" style="left:1122px;top:707.6px;width:30.1px;height:6.3px;background:#2db024;"></div><div class="a" style="left:1189.8px;top:702.3px;width:4.8px;height:4.8px;border-radius:50%;background:#b6b6b6;"></div><div class="t" style="left:1218.5px;top:686.69px;font-size:26px;line-height:36px;color:#7b7b7b;letter-spacing:-0.516px;">1/18/17, 11:38 PM</div><div class="t" style="left:1561.32px;top:686.69px;font-size:26px;line-height:36px;color:#7b7b7b;letter-spacing:0.779px;">5,338,002</div><svg class="a" style="left:1745.6px;top:690px;" width="25" height="30" viewBox="0 0 25 30"><path d="M0.5 0.5 H15.5 L24.5 8.5 V28.5 H0.5 Z" fill="#fbfbfb" stroke="#dcdcdc" stroke-width="1"/><path d="M15.5 0.5 V8.5 H24.5" fill="#f1f1f1" stroke="#d6d6d6" stroke-width="1"/><rect x="0.5" y="27.6" width="24" height="1.5" fill="#cfcfcf"/><rect x="6" y="8" width="10.5" height="6" fill="#b3c3f3"/><rect x="6" y="14" width="11.5" height="2.6" fill="#1e2654"/><rect x="16" y="16" width="2.2" height="3" fill="#444a70"/><rect x="7" y="18" width="9" height="1.6" fill="#b9bed0"/><rect x="3" y="21.5" width="19" height="1" fill="#ececec"/><rect x="3" y="24" width="19" height="1" fill="#ececec"/></svg><div class="t" style="left:1791.1px;top:686.69px;font-size:26px;line-height:36px;color:#000;letter-spacing:0.296px;">Classy_Wallpapers_705__015.jpg</div><div class="a" style="left:0px;top:726px;width:2274.4px;height:42px;background:#fff;"></div><svg class="a" style="left:51.3px;top:732px;" width="25" height="30" viewBox="0 0 25 30"><path d="M0.5 0.5 H15.5 L24.5 8.5 V28.5 H0.5 Z" fill="#fbfbfb" stroke="#dcdcdc" stroke-width="1"/><path d="M15.5 0.5 V8.5 H24.5" fill="#f1f1f1" stroke="#d6d6d6" stroke-width="1"/><rect x="0.5" y="27.6" width="24" height="1.5" fill="#cfcfcf"/><rect x="6" y="8" width="10.5" height="6" fill="#b3c3f3"/><rect x="6" y="14" width="11.5" height="2.6" fill="#1e2654"/><rect x="16" y="16" width="2.2" height="3" fill="#444a70"/><rect x="7" y="18" width="9" height="1.6" fill="#b9bed0"/><rect x="3" y="21.5" width="19" height="1" fill="#ececec"/><rect x="3" y="24" width="19" height="1" fill="#ececec"/></svg><div class="t" style="left:96.8px;top:728.69px;font-size:26px;line-height:36px;color:#000;letter-spacing:0.34px;">Classy_Wallpapers_705__014.jpg</div><div class="t" style="left:677.42px;top:728.69px;font-size:26px;line-height:36px;color:#7b7b7b;letter-spacing:0.779px;">4,739,344</div><div class="t" style="left:817px;top:728.69px;font-size:26px;line-height:36px;color:#7b7b7b;letter-spacing:0.059px;">11/20/16, 5:27 PM</div><div class="a" style="left:1080.9px;top:744.3px;width:4.8px;height:4.8px;border-radius:50%;background:#b6b6b6;"></div><div class="a" style="left:1122px;top:739.6px;width:30.1px;height:6.3px;background:#2db024;"></div><div class="a" style="left:1122px;top:749.6px;width:30.1px;height:6.3px;background:#2db024;"></div><div class="a" style="left:1189.8px;top:744.3px;width:4.8px;height:4.8px;border-radius:50%;background:#b6b6b6;"></div><div class="t" style="left:1218.5px;top:728.69px;font-size:26px;line-height:36px;color:#7b7b7b;letter-spacing:0.059px;">11/20/16, 5:27 PM</div><div class="t" style="left:1561.32px;top:728.69px;font-size:26px;line-height:36px;color:#7b7b7b;letter-spacing:0.779px;">4,739,344</div><svg class="a" style="left:1745.6px;top:732px;" width="25" height="30" viewBox="0 0 25 30"><path d="M0.5 0.5 H15.5 L24.5 8.5 V28.5 H0.5 Z" fill="#fbfbfb" stroke="#dcdcdc" stroke-width="1"/><path d="M15.5 0.5 V8.5 H24.5" fill="#f1f1f1" stroke="#d6d6d6" stroke-width="1"/><rect x="0.5" y="27.6" width="24" height="1.5" fill="#cfcfcf"/><rect x="6" y="8" width="10.5" height="6" fill="#b3c3f3"/><rect x="6" y="14" width="11.5" height="2.6" fill="#1e2654"/><rect x="16" y="16" width="2.2" height="3" fill="#444a70"/><rect x="7" y="18" width="9" height="1.6" fill="#b9bed0"/><rect x="3" y="21.5" width="19" height="1" fill="#ececec"/><rect x="3" y="24" width="19" height="1" fill="#ececec"/></svg><div class="t" style="left:1791.1px;top:728.69px;font-size:26px;line-height:36px;color:#000;letter-spacing:0.296px;">Classy_Wallpapers_705__014.jpg</div><div class="a" style="left:0px;top:768px;width:2274.4px;height:42px;background:#f4f4f5;"></div><svg class="a" style="left:51.3px;top:774px;" width="25" height="30" viewBox="0 0 25 30"><path d="M0.5 0.5 H15.5 L24.5 8.5 V28.5 H0.5 Z" fill="#fbfbfb" stroke="#dcdcdc" stroke-width="1"/><path d="M15.5 0.5 V8.5 H24.5" fill="#f1f1f1" stroke="#d6d6d6" stroke-width="1"/><rect x="0.5" y="27.6" width="24" height="1.5" fill="#cfcfcf"/><rect x="6" y="8" width="10.5" height="6" fill="#b3c3f3"/><rect x="6" y="14" width="11.5" height="2.6" fill="#1e2654"/><rect x="16" y="16" width="2.2" height="3" fill="#444a70"/><rect x="7" y="18" width="9" height="1.6" fill="#b9bed0"/><rect x="3" y="21.5" width="19" height="1" fill="#ececec"/><rect x="3" y="24" width="19" height="1" fill="#ececec"/></svg><div class="t" style="left:96.8px;top:770.69px;font-size:26px;line-height:36px;color:#000;letter-spacing:0.34px;">Classy_Wallpapers_705__013.jpg</div><div class="t" style="left:677.42px;top:770.69px;font-size:26px;line-height:36px;color:#7b7b7b;letter-spacing:0.779px;">3,540,065</div><div class="t" style="left:817px;top:770.69px;font-size:26px;line-height:36px;color:#7b7b7b;letter-spacing:0.38px;">11/23/16, 8:46 AM</div><div class="a" style="left:1080.9px;top:786.3px;width:4.8px;height:4.8px;border-radius:50%;background:#b6b6b6;"></div><div class="a" style="left:1122px;top:781.6px;width:30.1px;height:6.3px;background:#2db024;"></div><div class="a" style="left:1122px;top:791.6px;width:30.1px;height:6.3px;background:#2db024;"></div><div class="a" style="left:1189.8px;top:786.3px;width:4.8px;height:4.8px;border-radius:50%;background:#b6b6b6;"></div><div class="t" style="left:1218.5px;top:770.69px;font-size:26px;line-height:36px;color:#7b7b7b;letter-spacing:0.38px;">11/23/16, 8:46 AM</div><div class="t" style="left:1561.32px;top:770.69px;font-size:26px;line-height:36px;color:#7b7b7b;letter-spacing:0.779px;">3,540,065</div><svg class="a" style="left:1745.6px;top:774px;" width="25" height="30" viewBox="0 0 25 30"><path d="M0.5 0.5 H15.5 L24.5 8.5 V28.5 H0.5 Z" fill="#fbfbfb" stroke="#dcdcdc" stroke-width="1"/><path d="M15.5 0.5 V8.5 H24.5" fill="#f1f1f1" stroke="#d6d6d6" stroke-width="1"/><rect x="0.5" y="27.6" width="24" height="1.5" fill="#cfcfcf"/><rect x="6" y="8" width="10.5" height="6" fill="#b3c3f3"/><rect x="6" y="14" width="11.5" height="2.6" fill="#1e2654"/><rect x="16" y="16" width="2.2" height="3" fill="#444a70"/><rect x="7" y="18" width="9" height="1.6" fill="#b9bed0"/><rect x="3" y="21.5" width="19" height="1" fill="#ececec"/><rect x="3" y="24" width="19" height="1" fill="#ececec"/></svg><div class="t" style="left:1791.1px;top:770.69px;font-size:26px;line-height:36px;color:#000;letter-spacing:0.296px;">Classy_Wallpapers_705__013.jpg</div><div class="a" style="left:0px;top:810px;width:2274.4px;height:42px;background:#fff;"></div><svg class="a" style="left:51.3px;top:816px;" width="25" height="30" viewBox="0 0 25 30"><path d="M0.5 0.5 H15.5 L24.5 8.5 V28.5 H0.5 Z" fill="#fbfbfb" stroke="#dcdcdc" stroke-width="1"/><path d="M15.5 0.5 V8.5 H24.5" fill="#f1f1f1" stroke="#d6d6d6" stroke-width="1"/><rect x="0.5" y="27.6" width="24" height="1.5" fill="#cfcfcf"/><rect x="6" y="8" width="10.5" height="6" fill="#b3c3f3"/><rect x="6" y="14" width="11.5" height="2.6" fill="#1e2654"/><rect x="16" y="16" width="2.2" height="3" fill="#444a70"/><rect x="7" y="18" width="9" height="1.6" fill="#b9bed0"/><rect x="3" y="21.5" width="19" height="1" fill="#ececec"/><rect x="3" y="24" width="19" height="1" fill="#ececec"/></svg><div class="t" style="left:96.8px;top:812.69px;font-size:26px;line-height:36px;color:#000;letter-spacing:0.34px;">Classy_Wallpapers_705__012.jpg</div><div class="t" style="left:681.13px;top:812.69px;font-size:26px;line-height:36px;color:#7b7b7b;letter-spacing:0.366px;">3,740,847</div><div class="t" style="left:817px;top:812.69px;font-size:26px;line-height:36px;color:#7b7b7b;letter-spacing:0.38px;">11/23/16, 8:46 AM</div><div class="a" style="left:1080.9px;top:828.3px;width:4.8px;height:4.8px;border-radius:50%;background:#b6b6b6;"></div><div class="a" style="left:1122px;top:823.6px;width:30.1px;height:6.3px;background:#2db024;"></div><div class="a" style="left:1122px;top:833.6px;width:30.1px;height:6.3px;background:#2db024;"></div><div class="a" style="left:1189.8px;top:828.3px;width:4.8px;height:4.8px;border-radius:50%;background:#b6b6b6;"></div><div class="t" style="left:1218.5px;top:812.69px;font-size:26px;line-height:36px;color:#7b7b7b;letter-spacing:0.38px;">11/23/16, 8:46 AM</div><div class="t" style="left:1565.03px;top:812.69px;font-size:26px;line-height:36px;color:#7b7b7b;letter-spacing:0.366px;">3,740,847</div><svg class="a" style="left:1745.6px;top:816px;" width="25" height="30" viewBox="0 0 25 30"><path d="M0.5 0.5 H15.5 L24.5 8.5 V28.5 H0.5 Z" fill="#fbfbfb" stroke="#dcdcdc" stroke-width="1"/><path d="M15.5 0.5 V8.5 H24.5" fill="#f1f1f1" stroke="#d6d6d6" stroke-width="1"/><rect x="0.5" y="27.6" width="24" height="1.5" fill="#cfcfcf"/><rect x="6" y="8" width="10.5" height="6" fill="#b3c3f3"/><rect x="6" y="14" width="11.5" height="2.6" fill="#1e2654"/><rect x="16" y="16" width="2.2" height="3" fill="#444a70"/><rect x="7" y="18" width="9" height="1.6" fill="#b9bed0"/><rect x="3" y="21.5" width="19" height="1" fill="#ececec"/><rect x="3" y="24" width="19" height="1" fill="#ececec"/></svg><div class="t" style="left:1791.1px;top:812.69px;font-size:26px;line-height:36px;color:#000;letter-spacing:0.296px;">Classy_Wallpapers_705__012.jpg</div><div class="a" style="left:0px;top:852px;width:2274.4px;height:42px;background:#f4f4f5;"></div><svg class="a" style="left:51.3px;top:858px;" width="25" height="30" viewBox="0 0 25 30"><path d="M0.5 0.5 H15.5 L24.5 8.5 V28.5 H0.5 Z" fill="#fbfbfb" stroke="#dcdcdc" stroke-width="1"/><path d="M15.5 0.5 V8.5 H24.5" fill="#f1f1f1" stroke="#d6d6d6" stroke-width="1"/><rect x="0.5" y="27.6" width="24" height="1.5" fill="#cfcfcf"/><rect x="6" y="8" width="10.5" height="6" fill="#b3c3f3"/><rect x="6" y="14" width="11.5" height="2.6" fill="#1e2654"/><rect x="16" y="16" width="2.2" height="3" fill="#444a70"/><rect x="7" y="18" width="9" height="1.6" fill="#b9bed0"/><rect x="3" y="21.5" width="19" height="1" fill="#ececec"/><rect x="3" y="24" width="19" height="1" fill="#ececec"/></svg><div class="t" style="left:96.8px;top:854.69px;font-size:26px;line-height:36px;color:#000;letter-spacing:0.407px;">Classy_Wallpapers_705__011.jpg</div><div class="t" style="left:686.53px;top:854.69px;font-size:26px;line-height:36px;color:#7b7b7b;letter-spacing:-0.234px;">6,513,061</div><div class="t" style="left:817px;top:854.69px;font-size:26px;line-height:36px;color:#7b7b7b;letter-spacing:0.045px;">1/6/15, 7:59 PM</div><div class="a" style="left:1080.9px;top:870.3px;width:4.8px;height:4.8px;border-radius:50%;background:#b6b6b6;"></div><div class="a" style="left:1122px;top:865.6px;width:30.1px;height:6.3px;background:#2db024;"></div><div class="a" style="left:1122px;top:875.6px;width:30.1px;height:6.3px;background:#2db024;"></div><div class="a" style="left:1189.8px;top:870.3px;width:4.8px;height:4.8px;border-radius:50%;background:#b6b6b6;"></div><div class="t" style="left:1218.5px;top:854.69px;font-size:26px;line-height:36px;color:#7b7b7b;letter-spacing:0.045px;">1/6/15, 7:59 PM</div><div class="t" style="left:1570.43px;top:854.69px;font-size:26px;line-height:36px;color:#7b7b7b;letter-spacing:-0.234px;">6,513,061</div><svg class="a" style="left:1745.6px;top:858px;" width="25" height="30" viewBox="0 0 25 30"><path d="M0.5 0.5 H15.5 L24.5 8.5 V28.5 H0.5 Z" fill="#fbfbfb" stroke="#dcdcdc" stroke-width="1"/><path d="M15.5 0.5 V8.5 H24.5" fill="#f1f1f1" stroke="#d6d6d6" stroke-width="1"/><rect x="0.5" y="27.6" width="24" height="1.5" fill="#cfcfcf"/><rect x="6" y="8" width="10.5" height="6" fill="#b3c3f3"/><rect x="6" y="14" width="11.5" height="2.6" fill="#1e2654"/><rect x="16" y="16" width="2.2" height="3" fill="#444a70"/><rect x="7" y="18" width="9" height="1.6" fill="#b9bed0"/><rect x="3" y="21.5" width="19" height="1" fill="#ececec"/><rect x="3" y="24" width="19" height="1" fill="#ececec"/></svg><div class="t" style="left:1791.1px;top:854.69px;font-size:26px;line-height:36px;color:#000;letter-spacing:0.362px;">Classy_Wallpapers_705__011.jpg</div><div class="a" style="left:0px;top:894px;width:2274.4px;height:42px;background:#fff;"></div><svg class="a" style="left:51.3px;top:900px;" width="25" height="30" viewBox="0 0 25 30"><path d="M0.5 0.5 H15.5 L24.5 8.5 V28.5 H0.5 Z" fill="#fbfbfb" stroke="#dcdcdc" stroke-width="1"/><path d="M15.5 0.5 V8.5 H24.5" fill="#f1f1f1" stroke="#d6d6d6" stroke-width="1"/><rect x="0.5" y="27.6" width="24" height="1.5" fill="#cfcfcf"/><rect x="6" y="8" width="10.5" height="6" fill="#b3c3f3"/><rect x="6" y="14" width="11.5" height="2.6" fill="#1e2654"/><rect x="16" y="16" width="2.2" height="3" fill="#444a70"/><rect x="7" y="18" width="9" height="1.6" fill="#b9bed0"/><rect x="3" y="21.5" width="19" height="1" fill="#ececec"/><rect x="3" y="24" width="19" height="1" fill="#ececec"/></svg><div class="t" style="left:96.8px;top:896.69px;font-size:26px;line-height:36px;color:#000;letter-spacing:0.34px;">Classy_Wallpapers_705__010.jpg</div><div class="t" style="left:682.37px;top:896.69px;font-size:26px;line-height:36px;color:#7b7b7b;letter-spacing:0.229px;">3,367,967</div><div class="t" style="left:817px;top:896.69px;font-size:26px;line-height:36px;color:#7b7b7b;letter-spacing:0.32px;">12/20/14, 8:34 PM</div><div class="a" style="left:1080.9px;top:912.3px;width:4.8px;height:4.8px;border-radius:50%;background:#b6b6b6;"></div><div class="a" style="left:1122px;top:907.6px;width:30.1px;height:6.3px;background:#2db024;"></div><div class="a" style="left:1122px;top:917.6px;width:30.1px;height:6.3px;background:#2db024;"></div><div class="a" style="left:1189.8px;top:912.3px;width:4.8px;height:4.8px;border-radius:50%;background:#b6b6b6;"></div><div class="t" style="left:1218.5px;top:896.69px;font-size:26px;line-height:36px;color:#7b7b7b;letter-spacing:0.32px;">12/20/14, 8:34 PM</div><div class="t" style="left:1566.27px;top:896.69px;font-size:26px;line-height:36px;color:#7b7b7b;letter-spacing:0.229px;">3,367,967</div><svg class="a" style="left:1745.6px;top:900px;" width="25" height="30" viewBox="0 0 25 30"><path d="M0.5 0.5 H15.5 L24.5 8.5 V28.5 H0.5 Z" fill="#fbfbfb" stroke="#dcdcdc" stroke-width="1"/><path d="M15.5 0.5 V8.5 H24.5" fill="#f1f1f1" stroke="#d6d6d6" stroke-width="1"/><rect x="0.5" y="27.6" width="24" height="1.5" fill="#cfcfcf"/><rect x="6" y="8" width="10.5" height="6" fill="#b3c3f3"/><rect x="6" y="14" width="11.5" height="2.6" fill="#1e2654"/><rect x="16" y="16" width="2.2" height="3" fill="#444a70"/><rect x="7" y="18" width="9" height="1.6" fill="#b9bed0"/><rect x="3" y="21.5" width="19" height="1" fill="#ececec"/><rect x="3" y="24" width="19" height="1" fill="#ececec"/></svg><div class="t" style="left:1791.1px;top:896.69px;font-size:26px;line-height:36px;color:#000;letter-spacing:0.296px;">Classy_Wallpapers_705__010.jpg</div><div class="a" style="left:0px;top:936px;width:2274.4px;height:42px;background:#f4f4f5;"></div><svg class="a" style="left:51.3px;top:942px;" width="25" height="30" viewBox="0 0 25 30"><path d="M0.5 0.5 H15.5 L24.5 8.5 V28.5 H0.5 Z" fill="#fbfbfb" stroke="#dcdcdc" stroke-width="1"/><path d="M15.5 0.5 V8.5 H24.5" fill="#f1f1f1" stroke="#d6d6d6" stroke-width="1"/><rect x="0.5" y="27.6" width="24" height="1.5" fill="#cfcfcf"/><rect x="6" y="8" width="10.5" height="6" fill="#b3c3f3"/><rect x="6" y="14" width="11.5" height="2.6" fill="#1e2654"/><rect x="16" y="16" width="2.2" height="3" fill="#444a70"/><rect x="7" y="18" width="9" height="1.6" fill="#b9bed0"/><rect x="3" y="21.5" width="19" height="1" fill="#ececec"/><rect x="3" y="24" width="19" height="1" fill="#ececec"/></svg><div class="t" style="left:96.8px;top:938.69px;font-size:26px;line-height:36px;color:#000;letter-spacing:0.34px;">Classy_Wallpapers_705__009.jpg</div><div class="t" style="left:688px;top:938.69px;font-size:26px;line-height:36px;color:#7b7b7b;letter-spacing:-0.396px;">2,937,107</div><div class="t" style="left:817px;top:938.69px;font-size:26px;line-height:36px;color:#7b7b7b;letter-spacing:0.32px;">12/20/14, 8:34 PM</div><div class="a" style="left:1080.9px;top:954.3px;width:4.8px;height:4.8px;border-radius:50%;background:#b6b6b6;"></div><div class="a" style="left:1122px;top:949.6px;width:30.1px;height:6.3px;background:#2db024;"></div><div class="a" style="left:1122px;top:959.6px;width:30.1px;height:6.3px;background:#2db024;"></div><div class="a" style="left:1189.8px;top:954.3px;width:4.8px;height:4.8px;border-radius:50%;background:#b6b6b6;"></div><div class="t" style="left:1218.5px;top:938.69px;font-size:26px;line-height:36px;color:#7b7b7b;letter-spacing:0.32px;">12/20/14, 8:34 PM</div><div class="t" style="left:1571.9px;top:938.69px;font-size:26px;line-height:36px;color:#7b7b7b;letter-spacing:-0.396px;">2,937,107</div><svg class="a" style="left:1745.6px;top:942px;" width="25" height="30" viewBox="0 0 25 30"><path d="M0.5 0.5 H15.5 L24.5 8.5 V28.5 H0.5 Z" fill="#fbfbfb" stroke="#dcdcdc" stroke-width="1"/><path d="M15.5 0.5 V8.5 H24.5" fill="#f1f1f1" stroke="#d6d6d6" stroke-width="1"/><rect x="0.5" y="27.6" width="24" height="1.5" fill="#cfcfcf"/><rect x="6" y="8" width="10.5" height="6" fill="#b3c3f3"/><rect x="6" y="14" width="11.5" height="2.6" fill="#1e2654"/><rect x="16" y="16" width="2.2" height="3" fill="#444a70"/><rect x="7" y="18" width="9" height="1.6" fill="#b9bed0"/><rect x="3" y="21.5" width="19" height="1" fill="#ececec"/><rect x="3" y="24" width="19" height="1" fill="#ececec"/></svg><div class="t" style="left:1791.1px;top:938.69px;font-size:26px;line-height:36px;color:#000;letter-spacing:0.296px;">Classy_Wallpapers_705__009.jpg</div><div class="a" style="left:0px;top:978px;width:2274.4px;height:42px;background:#fff;"></div><svg class="a" style="left:51.3px;top:984px;" width="25" height="30" viewBox="0 0 25 30"><path d="M0.5 0.5 H15.5 L24.5 8.5 V28.5 H0.5 Z" fill="#fbfbfb" stroke="#dcdcdc" stroke-width="1"/><path d="M15.5 0.5 V8.5 H24.5" fill="#f1f1f1" stroke="#d6d6d6" stroke-width="1"/><rect x="0.5" y="27.6" width="24" height="1.5" fill="#cfcfcf"/><rect x="6" y="8" width="10.5" height="6" fill="#b3c3f3"/><rect x="6" y="14" width="11.5" height="2.6" fill="#1e2654"/><rect x="16" y="16" width="2.2" height="3" fill="#444a70"/><rect x="7" y="18" width="9" height="1.6" fill="#b9bed0"/><rect x="3" y="21.5" width="19" height="1" fill="#ececec"/><rect x="3" y="24" width="19" height="1" fill="#ececec"/></svg><div class="t" style="left:96.8px;top:980.69px;font-size:26px;line-height:36px;color:#000;letter-spacing:0.34px;">Classy_Wallpapers_705__008.jpg</div><div class="t" style="left:684.85px;top:980.69px;font-size:26px;line-height:36px;color:#7b7b7b;letter-spacing:-0.046px;">7,578,724</div><div class="t" style="left:817px;top:980.69px;font-size:26px;line-height:36px;color:#7b7b7b;letter-spacing:0.238px;">5/29/16, 6:13 PM</div><div class="a" style="left:1080.9px;top:996.3px;width:4.8px;height:4.8px;border-radius:50%;background:#b6b6b6;"></div><div class="a" style="left:1122px;top:991.6px;width:30.1px;height:6.3px;background:#2db024;"></div><div class="a" style="left:1122px;top:1001.6px;width:30.1px;height:6.3px;background:#2db024;"></div><div class="a" style="left:1189.8px;top:996.3px;width:4.8px;height:4.8px;border-radius:50%;background:#b6b6b6;"></div><div class="t" style="left:1218.5px;top:980.69px;font-size:26px;line-height:36px;color:#7b7b7b;letter-spacing:0.238px;">5/29/16, 6:13 PM</div><div class="t" style="left:1568.75px;top:980.69px;font-size:26px;line-height:36px;color:#7b7b7b;letter-spacing:-0.046px;">7,578,724</div><svg class="a" style="left:1745.6px;top:984px;" width="25" height="30" viewBox="0 0 25 30"><path d="M0.5 0.5 H15.5 L24.5 8.5 V28.5 H0.5 Z" fill="#fbfbfb" stroke="#dcdcdc" stroke-width="1"/><path d="M15.5 0.5 V8.5 H24.5" fill="#f1f1f1" stroke="#d6d6d6" stroke-width="1"/><rect x="0.5" y="27.6" width="24" height="1.5" fill="#cfcfcf"/><rect x="6" y="8" width="10.5" height="6" fill="#b3c3f3"/><rect x="6" y="14" width="11.5" height="2.6" fill="#1e2654"/><rect x="16" y="16" width="2.2" height="3" fill="#444a70"/><rect x="7" y="18" width="9" height="1.6" fill="#b9bed0"/><rect x="3" y="21.5" width="19" height="1" fill="#ececec"/><rect x="3" y="24" width="19" height="1" fill="#ececec"/></svg><div class="t" style="left:1791.1px;top:980.69px;font-size:26px;line-height:36px;color:#000;letter-spacing:0.296px;">Classy_Wallpapers_705__008.jpg</div><div class="a" style="left:0px;top:1020px;width:2274.4px;height:42px;background:#f4f4f5;"></div><svg class="a" style="left:51.3px;top:1026px;" width="25" height="30" viewBox="0 0 25 30"><path d="M0.5 0.5 H15.5 L24.5 8.5 V28.5 H0.5 Z" fill="#fbfbfb" stroke="#dcdcdc" stroke-width="1"/><path d="M15.5 0.5 V8.5 H24.5" fill="#f1f1f1" stroke="#d6d6d6" stroke-width="1"/><rect x="0.5" y="27.6" width="24" height="1.5" fill="#cfcfcf"/><rect x="6" y="8" width="10.5" height="6" fill="#b3c3f3"/><rect x="6" y="14" width="11.5" height="2.6" fill="#1e2654"/><rect x="16" y="16" width="2.2" height="3" fill="#444a70"/><rect x="7" y="18" width="9" height="1.6" fill="#b9bed0"/><rect x="3" y="21.5" width="19" height="1" fill="#ececec"/><rect x="3" y="24" width="19" height="1" fill="#ececec"/></svg><div class="t" style="left:96.8px;top:1022.69px;font-size:26px;line-height:36px;color:#000;letter-spacing:0.34px;">Classy_Wallpapers_705__007.jpg</div><div class="t" style="left:679.9px;top:1022.69px;font-size:26px;line-height:36px;color:#7b7b7b;letter-spacing:0.504px;">5,939,749</div><div class="t" style="left:817px;top:1022.69px;font-size:26px;line-height:36px;color:#7b7b7b;letter-spacing:0.238px;">5/29/16, 6:13 PM</div><div class="a" style="left:1080.9px;top:1038.3px;width:4.8px;height:4.8px;border-radius:50%;background:#b6b6b6;"></div><div class="a" style="left:1122px;top:1033.6px;width:30.1px;height:6.3px;background:#2db024;"></div><div class="a" style="left:1122px;top:1043.6px;width:30.1px;height:6.3px;background:#2db024;"></div><div class="a" style="left:1189.8px;top:1038.3px;width:4.8px;height:4.8px;border-radius:50%;background:#b6b6b6;"></div><div class="t" style="left:1218.5px;top:1022.69px;font-size:26px;line-height:36px;color:#7b7b7b;letter-spacing:0.238px;">5/29/16, 6:13 PM</div><div class="t" style="left:1563.8px;top:1022.69px;font-size:26px;line-height:36px;color:#7b7b7b;letter-spacing:0.504px;">5,939,749</div><svg class="a" style="left:1745.6px;top:1026px;" width="25" height="30" viewBox="0 0 25 30"><path d="M0.5 0.5 H15.5 L24.5 8.5 V28.5 H0.5 Z" fill="#fbfbfb" stroke="#dcdcdc" stroke-width="1"/><path d="M15.5 0.5 V8.5 H24.5" fill="#f1f1f1" stroke="#d6d6d6" stroke-width="1"/><rect x="0.5" y="27.6" width="24" height="1.5" fill="#cfcfcf"/><rect x="6" y="8" width="10.5" height="6" fill="#b3c3f3"/><rect x="6" y="14" width="11.5" height="2.6" fill="#1e2654"/><rect x="16" y="16" width="2.2" height="3" fill="#444a70"/><rect x="7" y="18" width="9" height="1.6" fill="#b9bed0"/><rect x="3" y="21.5" width="19" height="1" fill="#ececec"/><rect x="3" y="24" width="19" height="1" fill="#ececec"/></svg><div class="t" style="left:1791.1px;top:1022.69px;font-size:26px;line-height:36px;color:#000;letter-spacing:0.296px;">Classy_Wallpapers_705__007.jpg</div><div class="a" style="left:0px;top:1062px;width:2274.4px;height:42px;background:#fff;"></div><svg class="a" style="left:51.3px;top:1068px;" width="25" height="30" viewBox="0 0 25 30"><path d="M0.5 0.5 H15.5 L24.5 8.5 V28.5 H0.5 Z" fill="#fbfbfb" stroke="#dcdcdc" stroke-width="1"/><path d="M15.5 0.5 V8.5 H24.5" fill="#f1f1f1" stroke="#d6d6d6" stroke-width="1"/><rect x="0.5" y="27.6" width="24" height="1.5" fill="#cfcfcf"/><rect x="6" y="8" width="10.5" height="6" fill="#b3c3f3"/><rect x="6" y="14" width="11.5" height="2.6" fill="#1e2654"/><rect x="16" y="16" width="2.2" height="3" fill="#444a70"/><rect x="7" y="18" width="9" height="1.6" fill="#b9bed0"/><rect x="3" y="21.5" width="19" height="1" fill="#ececec"/><rect x="3" y="24" width="19" height="1" fill="#ececec"/></svg><div class="t" style="left:96.8px;top:1064.69px;font-size:26px;line-height:36px;color:#000;letter-spacing:0.34px;">Classy_Wallpapers_705__006.jpg</div><div class="t" style="left:686.08px;top:1064.69px;font-size:26px;line-height:36px;color:#7b7b7b;letter-spacing:-0.184px;">6,210,148</div><div class="t" style="left:817px;top:1064.69px;font-size:26px;line-height:36px;color:#7b7b7b;letter-spacing:0.165px;">5/29/16, 6:12 PM</div><div class="a" style="left:1080.9px;top:1080.3px;width:4.8px;height:4.8px;border-radius:50%;background:#b6b6b6;"></div><div class="a" style="left:1122px;top:1075.6px;width:30.1px;height:6.3px;background:#2db024;"></div><div class="a" style="left:1122px;top:1085.6px;width:30.1px;height:6.3px;background:#2db024;"></div><div class="a" style="left:1189.8px;top:1080.3px;width:4.8px;height:4.8px;border-radius:50%;background:#b6b6b6;"></div><div class="t" style="left:1218.5px;top:1064.69px;font-size:26px;line-height:36px;color:#7b7b7b;letter-spacing:0.165px;">5/29/16, 6:12 PM</div><div class="t" style="left:1569.98px;top:1064.69px;font-size:26px;line-height:36px;color:#7b7b7b;letter-spacing:-0.184px;">6,210,148</div><svg class="a" style="left:1745.6px;top:1068px;" width="25" height="30" viewBox="0 0 25 30"><path d="M0.5 0.5 H15.5 L24.5 8.5 V28.5 H0.5 Z" fill="#fbfbfb" stroke="#dcdcdc" stroke-width="1"/><path d="M15.5 0.5 V8.5 H24.5" fill="#f1f1f1" stroke="#d6d6d6" stroke-width="1"/><rect x="0.5" y="27.6" width="24" height="1.5" fill="#cfcfcf"/><rect x="6" y="8" width="10.5" height="6" fill="#b3c3f3"/><rect x="6" y="14" width="11.5" height="2.6" fill="#1e2654"/><rect x="16" y="16" width="2.2" height="3" fill="#444a70"/><rect x="7" y="18" width="9" height="1.6" fill="#b9bed0"/><rect x="3" y="21.5" width="19" height="1" fill="#ececec"/><rect x="3" y="24" width="19" height="1" fill="#ececec"/></svg><div class="t" style="left:1791.1px;top:1064.69px;font-size:26px;line-height:36px;color:#000;letter-spacing:0.296px;">Classy_Wallpapers_705__006.jpg</div><div class="a" style="left:0px;top:1104px;width:2274.4px;height:42px;background:#f4f4f5;"></div><svg class="a" style="left:51.3px;top:1110px;" width="25" height="30" viewBox="0 0 25 30"><path d="M0.5 0.5 H15.5 L24.5 8.5 V28.5 H0.5 Z" fill="#fbfbfb" stroke="#dcdcdc" stroke-width="1"/><path d="M15.5 0.5 V8.5 H24.5" fill="#f1f1f1" stroke="#d6d6d6" stroke-width="1"/><rect x="0.5" y="27.6" width="24" height="1.5" fill="#cfcfcf"/><rect x="6" y="8" width="10.5" height="6" fill="#b3c3f3"/><rect x="6" y="14" width="11.5" height="2.6" fill="#1e2654"/><rect x="16" y="16" width="2.2" height="3" fill="#444a70"/><rect x="7" y="18" width="9" height="1.6" fill="#b9bed0"/><rect x="3" y="21.5" width="19" height="1" fill="#ececec"/><rect x="3" y="24" width="19" height="1" fill="#ececec"/></svg><div class="t" style="left:96.8px;top:1106.69px;font-size:26px;line-height:36px;color:#000;letter-spacing:0.34px;">Classy_Wallpapers_705__005.jpg</div><div class="t" style="left:684.06px;top:1106.69px;font-size:26px;line-height:36px;color:#7b7b7b;letter-spacing:0.041px;">3,951,670</div><div class="t" style="left:817px;top:1106.69px;font-size:26px;line-height:36px;color:#7b7b7b;letter-spacing:0.393px;">Yesterday, 7:43 PM</div><div class="a" style="left:1080.9px;top:1122.3px;width:4.8px;height:4.8px;border-radius:50%;background:#b6b6b6;"></div><div class="a" style="left:1122px;top:1117.6px;width:30.1px;height:6.3px;background:#2db024;"></div><div class="a" style="left:1122px;top:1127.6px;width:30.1px;height:6.3px;background:#2db024;"></div><div class="a" style="left:1189.8px;top:1122.3px;width:4.8px;height:4.8px;border-radius:50%;background:#b6b6b6;"></div><div class="t" style="left:1218.5px;top:1106.69px;font-size:26px;line-height:36px;color:#7b7b7b;letter-spacing:0.393px;">Yesterday, 7:43 PM</div><div class="t" style="left:1567.96px;top:1106.69px;font-size:26px;line-height:36px;color:#7b7b7b;letter-spacing:0.041px;">3,951,670</div><svg class="a" style="left:1745.6px;top:1110px;" width="25" height="30" viewBox="0 0 25 30"><path d="M0.5 0.5 H15.5 L24.5 8.5 V28.5 H0.5 Z" fill="#fbfbfb" stroke="#dcdcdc" stroke-width="1"/><path d="M15.5 0.5 V8.5 H24.5" fill="#f1f1f1" stroke="#d6d6d6" stroke-width="1"/><rect x="0.5" y="27.6" width="24" height="1.5" fill="#cfcfcf"/><rect x="6" y="8" width="10.5" height="6" fill="#b3c3f3"/><rect x="6" y="14" width="11.5" height="2.6" fill="#1e2654"/><rect x="16" y="16" width="2.2" height="3" fill="#444a70"/><rect x="7" y="18" width="9" height="1.6" fill="#b9bed0"/><rect x="3" y="21.5" width="19" height="1" fill="#ececec"/><rect x="3" y="24" width="19" height="1" fill="#ececec"/></svg><div class="t" style="left:1791.1px;top:1106.69px;font-size:26px;line-height:36px;color:#000;letter-spacing:0.296px;">Classy_Wallpapers_705__005.jpg</div><div class="a" style="left:0px;top:1146px;width:2274.4px;height:42px;background:#fff;"></div><svg class="a" style="left:51.3px;top:1152px;" width="25" height="30" viewBox="0 0 25 30"><path d="M0.5 0.5 H15.5 L24.5 8.5 V28.5 H0.5 Z" fill="#fbfbfb" stroke="#dcdcdc" stroke-width="1"/><path d="M15.5 0.5 V8.5 H24.5" fill="#f1f1f1" stroke="#d6d6d6" stroke-width="1"/><rect x="0.5" y="27.6" width="24" height="1.5" fill="#cfcfcf"/><rect x="6" y="8" width="10.5" height="6" fill="#b3c3f3"/><rect x="6" y="14" width="11.5" height="2.6" fill="#1e2654"/><rect x="16" y="16" width="2.2" height="3" fill="#444a70"/><rect x="7" y="18" width="9" height="1.6" fill="#b9bed0"/><rect x="3" y="21.5" width="19" height="1" fill="#ececec"/><rect x="3" y="24" width="19" height="1" fill="#ececec"/></svg><div class="t" style="left:96.8px;top:1148.69px;font-size:26px;line-height:36px;color:#000;letter-spacing:0.34px;">Classy_Wallpapers_705__004.jpg</div><div class="t" style="left:677.42px;top:1148.69px;font-size:26px;line-height:36px;color:#7b7b7b;letter-spacing:0.779px;">5,043,605</div><div class="t" style="left:817px;top:1148.69px;font-size:26px;line-height:36px;color:#7b7b7b;letter-spacing:0.393px;">Yesterday, 7:43 PM</div><div class="a" style="left:1080.9px;top:1164.3px;width:4.8px;height:4.8px;border-radius:50%;background:#b6b6b6;"></div><div class="a" style="left:1122px;top:1159.6px;width:30.1px;height:6.3px;background:#2db024;"></div><div class="a" style="left:1122px;top:1169.6px;width:30.1px;height:6.3px;background:#2db024;"></div><div class="a" style="left:1189.8px;top:1164.3px;width:4.8px;height:4.8px;border-radius:50%;background:#b6b6b6;"></div><div class="t" style="left:1218.5px;top:1148.69px;font-size:26px;line-height:36px;color:#7b7b7b;letter-spacing:0.393px;">Yesterday, 7:43 PM</div><div class="t" style="left:1561.32px;top:1148.69px;font-size:26px;line-height:36px;color:#7b7b7b;letter-spacing:0.779px;">5,043,605</div><svg class="a" style="left:1745.6px;top:1152px;" width="25" height="30" viewBox="0 0 25 30"><path d="M0.5 0.5 H15.5 L24.5 8.5 V28.5 H0.5 Z" fill="#fbfbfb" stroke="#dcdcdc" stroke-width="1"/><path d="M15.5 0.5 V8.5 H24.5" fill="#f1f1f1" stroke="#d6d6d6" stroke-width="1"/><rect x="0.5" y="27.6" width="24" height="1.5" fill="#cfcfcf"/><rect x="6" y="8" width="10.5" height="6" fill="#b3c3f3"/><rect x="6" y="14" width="11.5" height="2.6" fill="#1e2654"/><rect x="16" y="16" width="2.2" height="3" fill="#444a70"/><rect x="7" y="18" width="9" height="1.6" fill="#b9bed0"/><rect x="3" y="21.5" width="19" height="1" fill="#ececec"/><rect x="3" y="24" width="19" height="1" fill="#ececec"/></svg><div class="t" style="left:1791.1px;top:1148.69px;font-size:26px;line-height:36px;color:#000;letter-spacing:0.296px;">Classy_Wallpapers_705__004.jpg</div><div class="a" style="left:0px;top:1188px;width:2274.4px;height:42px;background:#f4f4f5;"></div><svg class="a" style="left:51.3px;top:1194px;" width="25" height="30" viewBox="0 0 25 30"><path d="M0.5 0.5 H15.5 L24.5 8.5 V28.5 H0.5 Z" fill="#fbfbfb" stroke="#dcdcdc" stroke-width="1"/><path d="M15.5 0.5 V8.5 H24.5" fill="#f1f1f1" stroke="#d6d6d6" stroke-width="1"/><rect x="0.5" y="27.6" width="24" height="1.5" fill="#cfcfcf"/><rect x="6" y="8" width="10.5" height="6" fill="#b3c3f3"/><rect x="6" y="14" width="11.5" height="2.6" fill="#1e2654"/><rect x="16" y="16" width="2.2" height="3" fill="#444a70"/><rect x="7" y="18" width="9" height="1.6" fill="#b9bed0"/><rect x="3" y="21.5" width="19" height="1" fill="#ececec"/><rect x="3" y="24" width="19" height="1" fill="#ececec"/></svg><div class="t" style="left:96.8px;top:1190.69px;font-size:26px;line-height:36px;color:#000;letter-spacing:0.34px;">Classy_Wallpapers_705__003.jpg</div><div class="t" style="left:682.37px;top:1190.69px;font-size:26px;line-height:36px;color:#7b7b7b;letter-spacing:0.229px;">4,124,655</div><div class="t" style="left:817px;top:1190.69px;font-size:26px;line-height:36px;color:#7b7b7b;letter-spacing:0.393px;">Yesterday, 7:43 PM</div><div class="a" style="left:1080.9px;top:1206.3px;width:4.8px;height:4.8px;border-radius:50%;background:#b6b6b6;"></div><div class="a" style="left:1122px;top:1201.6px;width:30.1px;height:6.3px;background:#2db024;"></div><div class="a" style="left:1122px;top:1211.6px;width:30.1px;height:6.3px;background:#2db024;"></div><div class="a" style="left:1189.8px;top:1206.3px;width:4.8px;height:4.8px;border-radius:50%;background:#b6b6b6;"></div><div class="t" style="left:1218.5px;top:1190.69px;font-size:26px;line-height:36px;color:#7b7b7b;letter-spacing:0.393px;">Yesterday, 7:43 PM</div><div class="t" style="left:1566.27px;top:1190.69px;font-size:26px;line-height:36px;color:#7b7b7b;letter-spacing:0.229px;">4,124,655</div><svg class="a" style="left:1745.6px;top:1194px;" width="25" height="30" viewBox="0 0 25 30"><path d="M0.5 0.5 H15.5 L24.5 8.5 V28.5 H0.5 Z" fill="#fbfbfb" stroke="#dcdcdc" stroke-width="1"/><path d="M15.5 0.5 V8.5 H24.5" fill="#f1f1f1" stroke="#d6d6d6" stroke-width="1"/><rect x="0.5" y="27.6" width="24" height="1.5" fill="#cfcfcf"/><rect x="6" y="8" width="10.5" height="6" fill="#b3c3f3"/><rect x="6" y="14" width="11.5" height="2.6" fill="#1e2654"/><rect x="16" y="16" width="2.2" height="3" fill="#444a70"/><rect x="7" y="18" width="9" height="1.6" fill="#b9bed0"/><rect x="3" y="21.5" width="19" height="1" fill="#ececec"/><rect x="3" y="24" width="19" height="1" fill="#ececec"/></svg><div class="t" style="left:1791.1px;top:1190.69px;font-size:26px;line-height:36px;color:#000;letter-spacing:0.296px;">Classy_Wallpapers_705__003.jpg</div><div class="a" style="left:0px;top:1230px;width:2274.4px;height:42px;background:#fff;"></div><svg class="a" style="left:51.3px;top:1236px;" width="25" height="30" viewBox="0 0 25 30"><path d="M0.5 0.5 H15.5 L24.5 8.5 V28.5 H0.5 Z" fill="#fbfbfb" stroke="#dcdcdc" stroke-width="1"/><path d="M15.5 0.5 V8.5 H24.5" fill="#f1f1f1" stroke="#d6d6d6" stroke-width="1"/><rect x="0.5" y="27.6" width="24" height="1.5" fill="#cfcfcf"/><rect x="6" y="8" width="10.5" height="6" fill="#b3c3f3"/><rect x="6" y="14" width="11.5" height="2.6" fill="#1e2654"/><rect x="16" y="16" width="2.2" height="3" fill="#444a70"/><rect x="7" y="18" width="9" height="1.6" fill="#b9bed0"/><rect x="3" y="21.5" width="19" height="1" fill="#ececec"/><rect x="3" y="24" width="19" height="1" fill="#ececec"/></svg><div class="t" style="left:96.8px;top:1232.69px;font-size:26px;line-height:36px;color:#000;letter-spacing:0.34px;">Classy_Wallpapers_705__002.jpg</div><div class="t" style="left:682.37px;top:1232.69px;font-size:26px;line-height:36px;color:#7b7b7b;letter-spacing:0.229px;">6,216,479</div><div class="t" style="left:817px;top:1232.69px;font-size:26px;line-height:36px;color:#7b7b7b;letter-spacing:0.351px;">Yesterday, 7:42 PM</div><div class="a" style="left:1080.9px;top:1248.3px;width:4.8px;height:4.8px;border-radius:50%;background:#b6b6b6;"></div><div class="a" style="left:1122px;top:1243.6px;width:30.1px;height:6.3px;background:#2db024;"></div><div class="a" style="left:1122px;top:1253.6px;width:30.1px;height:6.3px;background:#2db024;"></div><div class="a" style="left:1189.8px;top:1248.3px;width:4.8px;height:4.8px;border-radius:50%;background:#b6b6b6;"></div><div class="t" style="left:1218.5px;top:1232.69px;font-size:26px;line-height:36px;color:#7b7b7b;letter-spacing:0.351px;">Yesterday, 7:42 PM</div><div class="t" style="left:1566.27px;top:1232.69px;font-size:26px;line-height:36px;color:#7b7b7b;letter-spacing:0.229px;">6,216,479</div><svg class="a" style="left:1745.6px;top:1236px;" width="25" height="30" viewBox="0 0 25 30"><path d="M0.5 0.5 H15.5 L24.5 8.5 V28.5 H0.5 Z" fill="#fbfbfb" stroke="#dcdcdc" stroke-width="1"/><path d="M15.5 0.5 V8.5 H24.5" fill="#f1f1f1" stroke="#d6d6d6" stroke-width="1"/><rect x="0.5" y="27.6" width="24" height="1.5" fill="#cfcfcf"/><rect x="6" y="8" width="10.5" height="6" fill="#b3c3f3"/><rect x="6" y="14" width="11.5" height="2.6" fill="#1e2654"/><rect x="16" y="16" width="2.2" height="3" fill="#444a70"/><rect x="7" y="18" width="9" height="1.6" fill="#b9bed0"/><rect x="3" y="21.5" width="19" height="1" fill="#ececec"/><rect x="3" y="24" width="19" height="1" fill="#ececec"/></svg><div class="t" style="left:1791.1px;top:1232.69px;font-size:26px;line-height:36px;color:#000;letter-spacing:0.296px;">Classy_Wallpapers_705__002.jpg</div><div class="a" style="left:0px;top:1272px;width:2274.4px;height:42px;background:#f4f4f5;"></div><svg class="a" style="left:51.3px;top:1278px;" width="25" height="30" viewBox="0 0 25 30"><path d="M0.5 0.5 H15.5 L24.5 8.5 V28.5 H0.5 Z" fill="#fbfbfb" stroke="#dcdcdc" stroke-width="1"/><path d="M15.5 0.5 V8.5 H24.5" fill="#f1f1f1" stroke="#d6d6d6" stroke-width="1"/><rect x="0.5" y="27.6" width="24" height="1.5" fill="#cfcfcf"/><rect x="6" y="8" width="10.5" height="6" fill="#b3c3f3"/><rect x="6" y="14" width="11.5" height="2.6" fill="#1e2654"/><rect x="16" y="16" width="2.2" height="3" fill="#444a70"/><rect x="7" y="18" width="9" height="1.6" fill="#b9bed0"/><rect x="3" y="21.5" width="19" height="1" fill="#ececec"/><rect x="3" y="24" width="19" height="1" fill="#ececec"/></svg><div class="t" style="left:96.8px;top:1274.69px;font-size:26px;line-height:36px;color:#000;letter-spacing:0.34px;">Classy_Wallpapers_705__001.jpg</div><div class="t" style="left:684.06px;top:1274.69px;font-size:26px;line-height:36px;color:#7b7b7b;letter-spacing:0.041px;">5,415,763</div><div class="t" style="left:817px;top:1274.69px;font-size:26px;line-height:36px;color:#7b7b7b;letter-spacing:0.351px;">Yesterday, 7:42 PM</div><div class="a" style="left:1080.9px;top:1290.3px;width:4.8px;height:4.8px;border-radius:50%;background:#b6b6b6;"></div><div class="a" style="left:1122px;top:1285.6px;width:30.1px;height:6.3px;background:#2db024;"></div><div class="a" style="left:1122px;top:1295.6px;width:30.1px;height:6.3px;background:#2db024;"></div><div class="a" style="left:1189.8px;top:1290.3px;width:4.8px;height:4.8px;border-radius:50%;background:#b6b6b6;"></div><div class="t" style="left:1218.5px;top:1274.69px;font-size:26px;line-height:36px;color:#7b7b7b;letter-spacing:0.351px;">Yesterday, 7:42 PM</div><div class="t" style="left:1567.96px;top:1274.69px;font-size:26px;line-height:36px;color:#7b7b7b;letter-spacing:0.041px;">5,415,763</div><svg class="a" style="left:1745.6px;top:1278px;" width="25" height="30" viewBox="0 0 25 30"><path d="M0.5 0.5 H15.5 L24.5 8.5 V28.5 H0.5 Z" fill="#fbfbfb" stroke="#dcdcdc" stroke-width="1"/><path d="M15.5 0.5 V8.5 H24.5" fill="#f1f1f1" stroke="#d6d6d6" stroke-width="1"/><rect x="0.5" y="27.6" width="24" height="1.5" fill="#cfcfcf"/><rect x="6" y="8" width="10.5" height="6" fill="#b3c3f3"/><rect x="6" y="14" width="11.5" height="2.6" fill="#1e2654"/><rect x="16" y="16" width="2.2" height="3" fill="#444a70"/><rect x="7" y="18" width="9" height="1.6" fill="#b9bed0"/><rect x="3" y="21.5" width="19" height="1" fill="#ececec"/><rect x="3" y="24" width="19" height="1" fill="#ececec"/></svg><div class="t" style="left:1791.1px;top:1274.69px;font-size:26px;line-height:36px;color:#000;letter-spacing:0.296px;">Classy_Wallpapers_705__001.jpg</div><div class="a" style="left:2282px;top:934.6px;width:16px;height:372.4px;border-radius:8px;background:#c1c1c1;"></div><div class="a" style="left:0px;top:213px;width:2306px;height:56px;background:#fff;border-top:1px solid #e3e3e3;border-bottom:1.5px solid #dadada;"></div><div class="t" style="left:36.8px;top:227.78px;font-size:22px;line-height:30px;color:#222;letter-spacing:-0.029px;">Name</div><div class="t" style="left:1700.8px;top:227.78px;font-size:22px;line-height:30px;color:#222;letter-spacing:-0.029px;">Name</div><div class="t" style="left:1219px;top:227.78px;font-size:22px;line-height:30px;color:#222;letter-spacing:0.109px;">Date</div><div class="t" style="left:1507.5px;top:227.78px;font-size:22px;line-height:30px;color:#222;letter-spacing:0.548px;">Size in bytes</div><div class="t" style="left:669px;top:227.78px;font-size:22px;line-height:30px;color:#222;letter-spacing:0.548px;">Size in bytes</div><div class="t" style="left:817px;top:227.78px;font-size:22px;line-height:30px;color:#222;letter-spacing:0.109px;">Date</div><div class="t" style="left:1085.3px;top:228.28px;font-size:22px;line-height:30px;color:#222;">&gt;</div><div class="t" style="left:1111.4px;top:228.28px;font-size:22px;line-height:30px;color:#222;">=</div><div class="t" style="left:1138.3px;top:228.28px;font-size:22px;line-height:30px;color:#222;">&lt;</div><div class="a" style="left:1064.05px;top:226px;width:1.5px;height:31px;background:#dedede;"></div><div class="a" style="left:1209.95px;top:226px;width:1.5px;height:31px;background:#dedede;"></div><div class="a" style="left:1466.05px;top:226px;width:1.5px;height:31px;background:#dedede;"></div><div class="a" style="left:1691.95px;top:226px;width:1.5px;height:31px;background:#dedede;"></div><div class="a" style="left:2272.25px;top:226px;width:1.5px;height:31px;background:#dedede;"></div><div class="a" style="left:651.25px;top:226px;width:1.5px;height:31px;background:#dedede;"></div><div class="a" style="left:808.25px;top:226px;width:1.5px;height:31px;background:#dedede;"></div><svg class="a" style="left:1179.6px;top:239.5px;" width="14.4" height="9" viewBox="0 0 14.4 9"><path d="M1.2 1.2 L7.2 7.6 L13.2 1.2" fill="none" stroke="#9b9b9b" stroke-width="2.2" stroke-linecap="round" stroke-linejoin="round"/></svg><div class="a" style="left:0px;top:1314px;width:2306px;height:56px;background:linear-gradient(180deg,#f7f7f7 0%,#f1f1f1 40%,#e3e3e3 100%);border-top:1.5px solid #dcdcdc;"></div><svg class="a" style="left:12px;top:1330.3px;" width="32" height="27.3" viewBox="0 0 32 27.3"><path d="M0 13.5 H14" stroke="#5479b4" stroke-width="3.2"/><path d="M11.5 7.2 L21 13.5 L11.5 19.8 Z" fill="#5479b4"/><rect x="26.3" y="0.8" width="5" height="25.7" fill="#7d9bd0" stroke="#5479b4" stroke-width="1.5"/></svg><svg class="a" style="left:67px;top:1330.5px;" width="27" height="25" viewBox="0 0 27 25"><path d="M0.5 3.5 a2 2 0 0 1 2 -2 h7 l2.5 2.8 h12 a2 2 0 0 1 2 2 v15.2 a2 2 0 0 1 -2 2 h-21.5 a2 2 0 0 1 -2 -2 Z" fill="#4ea7df"/><path d="M0.5 7.5 h25.5 v14 a2 2 0 0 1 -2 2 h-21.5 a2 2 0 0 1 -2 -2 Z" fill="#6ebff0"/><path d="M9.5 17 v-3.5 l3.7 -2.8 l3.7 2.8 v3.5 h-2.6 v-2.4 h-2.2 v2.4 Z" fill="#4a9fd6"/></svg><div class="t" style="left:102.7px;top:1326.78px;font-size:22px;line-height:30px;color:#7c7c7c;letter-spacing:0.344px;">admin</div><svg class="a" style="left:175.5px;top:1337px;" width="8" height="12" viewBox="0 0 8 12"><path d="M1.4 1.8 L5.8 6 L1.4 10.2" fill="none" stroke="#7c7c7c" stroke-width="2.5" stroke-linecap="round" stroke-linejoin="round"/></svg><svg class="a" style="left:196.9px;top:1330.5px;" width="27" height="25" viewBox="0 0 27 25"><path d="M0.5 3.5 a2 2 0 0 1 2 -2 h7 l2.5 2.8 h12 a2 2 0 0 1 2 2 v15.2 a2 2 0 0 1 -2 2 h-21.5 a2 2 0 0 1 -2 -2 Z" fill="#4ea7df"/><path d="M0.5 7.5 h25.5 v14 a2 2 0 0 1 -2 2 h-21.5 a2 2 0 0 1 -2 -2 Z" fill="#6ebff0"/><path d="M9 11 h4.5 l2 2 v5 h-6.5 Z M12.5 13.5 a2 2 0 1 0 0.1 0" fill="none" stroke="#4a9fd6" stroke-width="1.3"/></svg><div class="t" style="left:233px;top:1326.78px;font-size:22px;line-height:30px;color:#7c7c7c;letter-spacing:0.654px;">Documents</div><svg class="a" style="left:361.8px;top:1337px;" width="8" height="12" viewBox="0 0 8 12"><path d="M1.4 1.8 L5.8 6 L1.4 10.2" fill="none" stroke="#7c7c7c" stroke-width="2.5" stroke-linecap="round" stroke-linejoin="round"/></svg><svg class="a" style="left:382.4px;top:1330.5px;" width="27" height="25" viewBox="0 0 27 25"><path d="M0.5 3.5 a2 2 0 0 1 2 -2 h7 l2.5 2.8 h12 a2 2 0 0 1 2 2 v15.2 a2 2 0 0 1 -2 2 h-21.5 a2 2 0 0 1 -2 -2 Z" fill="#4ea7df"/><path d="M0.5 7.5 h25.5 v14 a2 2 0 0 1 -2 2 h-21.5 a2 2 0 0 1 -2 -2 Z" fill="#6ebff0"/></svg><div class="t" style="left:418.5px;top:1326.78px;font-size:22px;line-height:30px;color:#7c7c7c;letter-spacing:1.008px;">untitled</div><svg class="a" style="left:507.5px;top:1337px;" width="8" height="12" viewBox="0 0 8 12"><path d="M1.4 1.8 L5.8 6 L1.4 10.2" fill="none" stroke="#7c7c7c" stroke-width="2.5" stroke-linecap="round" stroke-linejoin="round"/></svg><svg class="a" style="left:531px;top:1332px;" width="19" height="23" viewBox="0 0 25 30"><path d="M0.5 0.5 H15.5 L24.5 8.5 V28.5 H0.5 Z" fill="#fbfbfb" stroke="#dcdcdc" stroke-width="1"/><path d="M15.5 0.5 V8.5 H24.5" fill="#f1f1f1" stroke="#d6d6d6" stroke-width="1"/><rect x="0.5" y="27.6" width="24" height="1.5" fill="#cfcfcf"/><rect x="6" y="8" width="10.5" height="6" fill="#b3c3f3"/><rect x="6" y="14" width="11.5" height="2.6" fill="#1e2654"/><rect x="16" y="16" width="2.2" height="3" fill="#444a70"/><rect x="7" y="18" width="9" height="1.6" fill="#b9bed0"/><rect x="3" y="21.5" width="19" height="1" fill="#ececec"/><rect x="3" y="24" width="19" height="1" fill="#ececec"/></svg><div class="t" style="left:564px;top:1326.78px;font-size:22px;line-height:30px;color:#7c7c7c;letter-spacing:0.446px;">Classy_Wallpapers_705__018.jpg</div><div class="a" style="left:2015.9px;top:1322px;width:62px;height:40px;border-radius:9px;background:linear-gradient(180deg,#6681e0,#5a74d6);"></div><div class="a" style="left:2085.9px;top:1322px;width:62px;height:40px;border-radius:9px;background:linear-gradient(180deg,#6681e0,#5a74d6);"></div><div class="a" style="left:2155.9px;top:1322px;width:62px;height:40px;border-radius:9px;background:linear-gradient(180deg,#6681e0,#5a74d6);"></div><div class="a" style="left:2225.9px;top:1322px;width:62px;height:40px;border-radius:9px;background:linear-gradient(180deg,#6681e0,#5a74d6);"></div><svg class="a" style="left:2015.9px;top:1322px;" width="62" height="40" viewBox="0 0 62 40"><path d="M19 14.3 H43 M19 25.7 H43" stroke="#fff" stroke-width="2.6" fill="none" stroke-linecap="round" stroke-linejoin="round"/></svg><svg class="a" style="left:2085.9px;top:1322px;" width="62" height="40" viewBox="0 0 62 40"><path d="M19 14.3 H43 M19 25.7 H43 M21.5 6.5 L40.5 33.5" stroke="#fff" stroke-width="2.6" fill="none" stroke-linecap="round" stroke-linejoin="round"/></svg><svg class="a" style="left:2155.9px;top:1322px;" width="62" height="40" viewBox="0 0 62 40"><path d="M42.5 20 H19.5 M27.5 11.5 L19.5 20 L27.5 28.5" stroke="#fff" stroke-width="2.6" fill="none" stroke-linecap="round" stroke-linejoin="round"/></svg><svg class="a" style="left:2225.9px;top:1322px;" width="62" height="40" viewBox="0 0 62 40"><path d="M19.5 20 H42.5 M34.5 11.5 L42.5 20 L34.5 28.5" stroke="#fff" stroke-width="2.6" fill="none" stroke-linecap="round" stroke-linejoin="round"/></svg></div><div class="a" style="left:0px;top:0px;width:2396px;height:48px;background:linear-gradient(180deg,#d9d9d9 0,#d9d9d9 34px,#dad8d6 41px,#cfd9e1 48px);"></div><svg class="a" style="left:43.5px;top:5.2px;" width="27" height="32" viewBox="0 1.5 24.5 29"><path fill="#1d1d1f" d="M19.7 16.1c0-3.3 2.7-4.9 2.8-5-1.5-2.2-3.9-2.5-4.8-2.6-2-.2-4 1.2-5 1.2-1 0-2.6-1.2-4.3-1.1-2.2 0-4.3 1.3-5.4 3.3-2.3 4-0.6 9.9 1.7 13.2 1.1 1.6 2.4 3.4 4.1 3.3 1.7-.1 2.3-1.1 4.3-1.1s2.6 1.1 4.3 1c1.8 0 2.9-1.6 4-3.2 1.3-1.8 1.8-3.6 1.8-3.7-.1 0-3.5-1.3-3.5-5.3zM16.4 6.3c.9-1.1 1.5-2.6 1.3-4.2-1.3.1-2.9.9-3.8 2-.800 1-1.6 2.5-1.4 4 1.5.1 3-.7 3.9-1.8z"/></svg><div class="t" style="left:115.3px;top:5.39px;font-size:26px;line-height:36px;color:#1d1d1f;font-weight:700;letter-spacing:0.056px;">DirEqual</div><div class="t" style="left:266px;top:5.39px;font-size:26px;line-height:36px;color:#1d1d1f;letter-spacing:-0.766px;">File</div><div class="t" style="left:349.3px;top:5.39px;font-size:26px;line-height:36px;color:#1d1d1f;letter-spacing:-0.434px;">Edit</div><div class="t" style="left:437.4px;top:5.39px;font-size:26px;line-height:36px;color:#1d1d1f;letter-spacing:0.337px;">View</div><div class="t" style="left:537.2px;top:5.39px;font-size:26px;line-height:36px;color:#1d1d1f;letter-spacing:0.525px;">Window</div><div class="t" style="left:674.8px;top:5.39px;font-size:26px;line-height:36px;color:#1d1d1f;letter-spacing:0.142px;">Help</div><svg class="a" style="left:2129.8px;top:9.3px;" width="32.5" height="26" viewBox="0 0 32.5 26"><g fill="none" stroke="#a6a6a6" stroke-width="4" stroke-linecap="round"><path d="M3 9.8 A19 19 0 0 1 29.5 9.8"/><path d="M8.3 15.6 A11.5 11.5 0 0 1 24.2 15.6"/></g><path fill="#a6a6a6" d="M16.25 24.5 L12.2 20.2 A5.8 5.8 0 0 1 20.3 20.2 Z"/></svg><svg class="a" style="left:2200.2px;top:12.4px;" width="24" height="25" viewBox="0 0 24 25"><circle cx="9.6" cy="9.6" r="8" fill="none" stroke="#1d1d1f" stroke-width="2.6"/><path d="M15.3 15.6 L21.6 22.8" stroke="#1d1d1f" stroke-width="3.3" stroke-linecap="round"/></svg><svg class="a" style="left:2262px;top:12px;" width="28" height="26" viewBox="0 0 28 26"><rect x="1.3" y="1.3" width="25.4" height="9.6" rx="4.8" fill="none" stroke="#3a3a3c" stroke-width="2.2"/><circle cx="7" cy="6.1" r="2.7" fill="#3a3a3c"/><rect x="0.2" y="14.6" width="27.6" height="11" rx="5.5" fill="#3a3a3c"/><circle cx="21.6" cy="20.1" r="3" fill="#d9d9d9"/></svg><svg class="a" style="left:2325px;top:6.8px;" width="34" height="34" viewBox="0 0 34 34"><circle cx="17" cy="17" r="15.5" fill="none" stroke="#1d1d1f" stroke-width="2.5"/><path d="M5.4 13.8 L16.6 17.6 L13.4 25" fill="none" stroke="#1d1d1f" stroke-width="2.3" stroke-linejoin="miter"/></svg><svg class="a" style="left:599.8px;top:129.6px;filter:drop-shadow(0 0 6px rgba(0,0,0,.16));" width="56" height="29" viewBox="0 0 56 29"><path d="M0 24.9 C6 24.9 8.6 23.6 11.2 20.8 L25.6 4.4 Q27.8 2 30 4.4 L44.4 20.8 C47 23.6 49.6 24.9 55.6 24.9 V29 H0 Z" fill="#e3e3e3" stroke="rgba(0,0,0,.2)" stroke-width="1.6"/></svg><div class="a" style="left:202px;top:156.3px;width:852.4px;height:833.9px;border-radius:21px;background:#e3e3e3;box-shadow:0 0 0 1px rgba(0,0,0,.17),0 14px 36px rgba(0,0,0,.22),0 0 6px rgba(0,0,0,.05);"></div><div class="a" style="left:600.2px;top:155.2px;width:55px;height:5px;background:#e3e3e3;"></div><div class="t" style="left:365.37px;top:203.19px;font-size:26px;line-height:36px;color:#1e1e1e;letter-spacing:0.228px;">GUI appearance:</div><div class="t" style="left:348.92px;top:403.19px;font-size:26px;line-height:36px;color:#1e1e1e;letter-spacing:0.576px;">Items to compare:</div><div class="t" style="left:475.46px;top:603.19px;font-size:26px;line-height:36px;color:#1e1e1e;letter-spacing:0.037px;">Aliases:</div><div class="t" style="left:396.5px;top:715.19px;font-size:26px;line-height:36px;color:#1e1e1e;letter-spacing:0.396px;">File metadata:</div><div class="t" style="left:333.22px;top:827.19px;font-size:26px;line-height:36px;color:#1e1e1e;letter-spacing:0.477px;">Comparison speed:</div><div class="t" style="left:393.04px;top:901.19px;font-size:26px;line-height:36px;color:#1e1e1e;letter-spacing:0.36px;">Compare only:</div><div class="a" style="left:584px;top:206px;width:28px;height:28px;border-radius:7px;background:#a7a7a7;"></div><div class="t" style="left:624.8px;top:203.89px;font-size:26px;line-height:36px;color:#1e1e1e;letter-spacing:0.623px;">Color backgrounds</div><div class="a" style="left:584px;top:250px;width:28px;height:28px;border-radius:7px;background:#a7a7a7;"></div><div class="t" style="left:624.8px;top:247.89px;font-size:26px;line-height:36px;color:#1e1e1e;letter-spacing:0.414px;">Show column lines</div><div class="a" style="left:584px;top:294px;width:28px;height:28px;border-radius:7px;background:linear-gradient(180deg,#2f78f8,#0f5be6);box-shadow:0 0 0 0.5px rgba(0,60,200,.5);"></div><svg class="a" style="left:584px;top:294px;" width="28" height="28" viewBox="0 0 28 28"><path d="M5.8 13.2 L12.1 21 L22.8 6.2" fill="none" stroke="#fff" stroke-width="3.7" stroke-linecap="round" stroke-linejoin="round"/></svg><div class="t" style="left:624.8px;top:291.89px;font-size:26px;line-height:36px;color:#1e1e1e;letter-spacing:0.643px;">Alternating row colors</div><div class="a" style="left:584px;top:338px;width:28px;height:28px;border-radius:7px;background:linear-gradient(180deg,#2f78f8,#0f5be6);box-shadow:0 0 0 0.5px rgba(0,60,200,.5);"></div><svg class="a" style="left:584px;top:338px;" width="28" height="28" viewBox="0 0 28 28"><path d="M5.8 13.2 L12.1 21 L22.8 6.2" fill="none" stroke="#fff" stroke-width="3.7" stroke-linecap="round" stroke-linejoin="round"/></svg><div class="t" style="left:624.8px;top:335.89px;font-size:26px;line-height:36px;color:#1e1e1e;letter-spacing:0.446px;">Display time</div><div class="a" style="left:584px;top:406px;width:28px;height:28px;border-radius:7px;background:linear-gradient(180deg,#2f78f8,#0f5be6);box-shadow:0 0 0 0.5px rgba(0,60,200,.5);"></div><svg class="a" style="left:584px;top:406px;" width="28" height="28" viewBox="0 0 28 28"><path d="M5.8 13.2 L12.1 21 L22.8 6.2" fill="none" stroke="#fff" stroke-width="3.7" stroke-linecap="round" stroke-linejoin="round"/></svg><div class="t" style="left:624.8px;top:403.89px;font-size:26px;line-height:36px;color:#1e1e1e;letter-spacing:0.558px;">Compare subfolders</div><div class="a" style="left:584px;top:450px;width:28px;height:28px;border-radius:7px;background:#a7a7a7;"></div><div class="t" style="left:624.8px;top:447.89px;font-size:26px;line-height:36px;color:#1e1e1e;letter-spacing:0.423px;">Ignore dates</div><div class="a" style="left:584px;top:494px;width:28px;height:28px;border-radius:7px;background:#a7a7a7;"></div><div class="t" style="left:624.8px;top:491.89px;font-size:26px;line-height:36px;color:#1e1e1e;letter-spacing:0.564px;">Include hidden items</div><div class="a" style="left:584px;top:538px;width:28px;height:28px;border-radius:7px;background:linear-gradient(180deg,#2f78f8,#0f5be6);box-shadow:0 0 0 0.5px rgba(0,60,200,.5);"></div><svg class="a" style="left:584px;top:538px;" width="28" height="28" viewBox="0 0 28 28"><path d="M5.8 13.2 L12.1 21 L22.8 6.2" fill="none" stroke="#fff" stroke-width="3.7" stroke-linecap="round" stroke-linejoin="round"/></svg><div class="t" style="left:624.8px;top:535.89px;font-size:26px;line-height:36px;color:#1e1e1e;letter-spacing:0.653px;">Include empty folders</div><div class="a" style="left:584px;top:606px;width:28px;height:28px;border-radius:7px;background:linear-gradient(180deg,#2f78f8,#0f5be6);box-shadow:0 0 0 0.5px rgba(0,60,200,.5);"></div><svg class="a" style="left:584px;top:606px;" width="28" height="28" viewBox="0 0 28 28"><path d="M5.8 13.2 L12.1 21 L22.8 6.2" fill="none" stroke="#fff" stroke-width="3.7" stroke-linecap="round" stroke-linejoin="round"/></svg><div class="t" style="left:624.8px;top:603.89px;font-size:26px;line-height:36px;color:#1e1e1e;letter-spacing:0.286px;">Include aliases</div><div class="a" style="left:584px;top:650px;width:28px;height:28px;border-radius:7px;background:#a7a7a7;"></div><div class="t" style="left:624.8px;top:647.89px;font-size:26px;line-height:36px;color:#1e1e1e;">Resolve aliases</div><div class="a" style="left:584px;top:718px;width:28px;height:28px;border-radius:7px;background:#a7a7a7;"></div><div class="t" style="left:624.8px;top:715.89px;font-size:26px;line-height:36px;color:#1e1e1e;letter-spacing:0.482px;">Compare resource forks</div><div class="a" style="left:584px;top:762px;width:28px;height:28px;border-radius:7px;background:#a7a7a7;"></div><div class="t" style="left:624.8px;top:759.89px;font-size:26px;line-height:36px;color:#1e1e1e;letter-spacing:0.533px;">Compare file tags</div><div class="a" style="left:584px;top:830px;width:28px;height:28px;border-radius:7px;background:linear-gradient(180deg,#2f78f8,#0f5be6);box-shadow:0 0 0 0.5px rgba(0,60,200,.5);"></div><svg class="a" style="left:584px;top:830px;" width="28" height="28" viewBox="0 0 28 28"><path d="M5.8 13.2 L12.1 21 L22.8 6.2" fill="none" stroke="#fff" stroke-width="3.7" stroke-linecap="round" stroke-linejoin="round"/></svg><div class="t" style="left:624.8px;top:827.89px;font-size:26px;line-height:36px;color:#1e1e1e;letter-spacing:0.494px;">Calculate folders size</div><div class="a" style="left:577.8px;top:896.3px;width:348.2px;height:45.5px;border-radius:8px;background:#7396e3;"></div><div class="a" style="left:584.5px;top:903px;width:334.4px;height:31.7px;background:#c2c2c2;box-shadow:inset 0 0 0 1px rgba(90,120,200,.35);"></div><div class="a" style="left:589.6px;top:904.4px;width:2.2px;height:27.6px;background:#111;"></div><svg class="a" width="0" height="0" style="left:0;top:0"><defs><linearGradient id="gFinL" x1="0" y1="0" x2="0" y2="1"><stop offset="0" stop-color="#1fb0fb"/><stop offset="1" stop-color="#1a6ef0"/></linearGradient><linearGradient id="gFinR" x1="0" y1="0" x2="0" y2="1"><stop offset="0" stop-color="#f4f6fa"/><stop offset="1" stop-color="#d6dbe6"/></linearGradient><linearGradient id="gMsg" x1="0" y1="0" x2="0" y2="1"><stop offset="0" stop-color="#67f37a"/><stop offset="1" stop-color="#0cbd2a"/></linearGradient><linearGradient id="gMail" x1="0" y1="0" x2="0" y2="1"><stop offset="0" stop-color="#1d6cf2"/><stop offset="1" stop-color="#3cc4fc"/></linearGradient><linearGradient id="gFt" x1="0" y1="0" x2="0" y2="1"><stop offset="0" stop-color="#64f378"/><stop offset="1" stop-color="#0fbf2c"/></linearGradient><linearGradient id="gMus" x1="0" y1="0" x2="0" y2="1"><stop offset="0" stop-color="#fb5c74"/><stop offset="1" stop-color="#fa233b"/></linearGradient><linearGradient id="gPod" x1="0" y1="0" x2="0" y2="1"><stop offset="0" stop-color="#d873fb"/><stop offset="1" stop-color="#8028c0"/></linearGradient><linearGradient id="gApp" x1="0" y1="0" x2="0" y2="1"><stop offset="0" stop-color="#1ac3fb"/><stop offset="1" stop-color="#1b72e8"/></linearGradient><linearGradient id="gTv" x1="0" y1="0" x2="0" y2="1"><stop offset="0" stop-color="#232d2c"/><stop offset="1" stop-color="#0d1212"/></linearGradient><linearGradient id="gOr" x1="0" y1="0" x2="0" y2="1"><stop offset="0" stop-color="#d27a40"/><stop offset="1" stop-color="#b44a17"/></linearGradient><linearGradient id="gSaf" x1="0" y1="0" x2="0" y2="1"><stop offset="0" stop-color="#1e9cf0"/><stop offset="1" stop-color="#1b6fe0"/></linearGradient><linearGradient id="gNotes" x1="0" y1="0" x2="0" y2="1"><stop offset="0" stop-color="#fefefe"/><stop offset="1" stop-color="#ebe9e4"/></linearGradient><linearGradient id="gCont" x1="0" y1="0" x2="0" y2="1"><stop offset="0" stop-color="#b88a55"/><stop offset="1" stop-color="#9d7040"/></linearGradient><linearGradient id="gPref" x1="0" y1="0" x2="0" y2="1"><stop offset="0" stop-color="#d6d9dc"/><stop offset="1" stop-color="#8f9296"/></linearGradient><linearGradient id="gWhite" x1="0" y1="0" x2="0" y2="1"><stop offset="0" stop-color="#ffffff"/><stop offset="1" stop-color="#ececec"/></linearGradient><linearGradient id="gLp" x1="0" y1="0" x2="0" y2="1"><stop offset="0" stop-color="#f4f4f6"/><stop offset="1" stop-color="#e4e5e8"/></linearGradient><linearGradient id="gTrash" x1="0" y1="0" x2="0" y2="1"><stop offset="0" stop-color="#f4f4f5"/><stop offset="1" stop-color="#d4d5d8"/></linearGradient><linearGradient id="gDl" x1="0" y1="0" x2="0" y2="1"><stop offset="0" stop-color="#7fd0fb"/><stop offset="1" stop-color="#62bcf4"/></linearGradient><linearGradient id="gMt" x1="0" y1="0" x2="0" y2="1"><stop offset="0" stop-color="#4aa3e4"/><stop offset="1" stop-color="#3f8fd4"/></linearGradient><linearGradient id="gBub" x1="0" y1="0" x2="0" y2="1"><stop offset="0" stop-color="#ffffff"/><stop offset="1" stop-color="#c9f2cf"/></linearGradient><linearGradient id="gCam" x1="0" y1="0" x2="0" y2="1"><stop offset="0" stop-color="#ffffff"/><stop offset="1" stop-color="#c4f0ca"/></linearGradient><clipPath id="cpI"><rect x="1" y="1" width="70" height="70" rx="16"/></clipPath></defs></svg><div class="a" style="left:78.2px;top:1426.4px;width:2240.5px;height:117.3px;border-radius:30px;background:#cdcdcd;border:2px solid rgba(255,255,255,.92);box-shadow:0 0 0 1.2px rgba(20,20,45,.6),0 4px 16px rgba(0,0,0,.22);"></div><svg class="a" style="left:95.2px;top:1443.5px;filter:drop-shadow(0 1px 1.5px rgba(0,0,0,.28));" width="72" height="72" viewBox="0 0 72 72"><g clip-path="url(#cpI)"><rect x="1" y="1" width="70" height="70" rx="16" fill="url(#gFinL)" /><path d="M40 1 C33 14 30 28 29.5 42 H38 C38 52 39.5 63 43 71 H71 V1 Z" fill="url(#gFinR)"/><path d="M40 1 C33 14 30 28 29.5 42 H38 C38 52 39.5 63 43 71" fill="none" stroke="#1d2b3f" stroke-width="1.3" opacity=".55"/></g><rect x="18.5" y="21" width="2.8" height="7.5" rx="1.4" fill="#1d2b3f"/><rect x="51.5" y="21" width="2.8" height="7.5" rx="1.4" fill="#1d2b3f"/><path d="M14 46.5 C24 58 47 58 58 46.5" fill="none" stroke="#1d2b3f" stroke-width="2.2" stroke-linecap="round"/></svg><svg class="a" style="left:190.2px;top:1443.5px;filter:drop-shadow(0 1px 1.5px rgba(0,0,0,.28));" width="72" height="72" viewBox="0 0 72 72"><rect x="1" y="1" width="70" height="70" rx="16" fill="url(#gLp)" /><rect x="12.5" y="13" width="12.5" height="12.5" rx="3" fill="#3ee04a"/><rect x="29.8" y="13" width="12.5" height="12.5" rx="3" fill="#fdbb10"/><rect x="47.1" y="13" width="12.5" height="12.5" rx="3" fill="#fb8a12"/><rect x="12.5" y="30.3" width="12.5" height="12.5" rx="3" fill="#e5131f"/><rect x="29.8" y="30.3" width="12.5" height="12.5" rx="3" fill="#a9adb0"/><rect x="47.1" y="30.3" width="12.5" height="12.5" rx="3" fill="#fb3560"/><rect x="12.5" y="47.6" width="12.5" height="12.5" rx="3" fill="#a436e3"/><rect x="29.8" y="47.6" width="12.5" height="12.5" rx="3" fill="#1a9af2"/><rect x="47.1" y="47.6" width="12.5" height="12.5" rx="3" fill="#2fd7a7"/></svg><svg class="a" style="left:285.2px;top:1443.5px;filter:drop-shadow(0 1px 1.5px rgba(0,0,0,.28));" width="72" height="72" viewBox="0 0 72 72"><rect x="1" y="1" width="70" height="70" rx="16" fill="url(#gWhite)" /><circle cx="36" cy="36" r="30" fill="url(#gSaf)"/><path d="M64.6 36L59.8 36M64.4 39L61.9 38.7M64 41.9L59.3 40.9M63.2 44.8L60.7 44M62.1 47.6L57.7 45.7M60.8 50.3L58.5 49M59.1 52.8L55.3 50M57.3 55.1L55.3 53.4M55.1 57.3L51.9 53.7M52.8 59.1L51.3 57M50.3 60.8L47.9 56.6M47.6 62.1L46.6 59.8M44.8 63.2L43.4 58.6M41.9 64L41.4 61.4M39 64.4L38.5 59.7M36 64.6L36 62M33 64.4L33.5 59.7M30.1 64L30.6 61.4M27.2 63.2L28.6 58.6M24.4 62.1L25.4 59.8M21.7 60.8L24.1 56.6M19.2 59.1L20.7 57M16.9 57.3L20.1 53.7M14.7 55.1L16.7 53.4M12.9 52.8L16.7 50M11.2 50.3L13.5 49M9.9 47.6L14.3 45.7M8.8 44.8L11.3 44M8 41.9L12.7 40.9M7.6 39L10.1 38.7M7.4 36L12.2 36M7.6 33L10.1 33.3M8 30.1L12.7 31.1M8.8 27.2L11.3 28M9.9 24.4L14.3 26.3M11.2 21.7L13.5 23M12.9 19.2L16.7 22M14.7 16.9L16.7 18.6M16.9 14.7L20.1 18.3M19.2 12.9L20.7 15M21.7 11.2L24.1 15.4M24.4 9.9L25.4 12.2M27.2 8.8L28.6 13.4M30.1 8L30.6 10.6M33 7.6L33.5 12.3M36 7.4L36 10M39 7.6L38.5 12.3M41.9 8L41.4 10.6M44.8 8.8L43.4 13.4M47.6 9.9L46.6 12.2M50.3 11.2L47.9 15.4M52.8 12.9L51.3 15M55.1 14.7L51.9 18.3M57.3 16.9L55.3 18.6M59.1 19.2L55.3 22M60.8 21.7L58.5 23M62.1 24.4L57.7 26.3M63.2 27.2L60.7 28M64 30.1L59.3 31.1M64.4 33L61.9 33.3" stroke="#fff" stroke-width="1.1" opacity=".92"/><path d="M57.5 14.5 L33.6 33.6 L38.4 38.4 Z" fill="#e8413a"/><path d="M57.5 14.5 L36 36 L38.4 38.4 Z" fill="#b5302c"/><path d="M14.5 57.5 L33.6 33.6 L38.4 38.4 Z" fill="#f7f7f7"/><path d="M14.5 57.5 L36 36 L38.4 38.4 Z" fill="#d9dbe0"/></svg><svg class="a" style="left:380.2px;top:1443.5px;filter:drop-shadow(0 1px 1.5px rgba(0,0,0,.28));" width="72" height="72" viewBox="0 0 72 72"><rect x="1" y="1" width="70" height="70" rx="16" fill="url(#gMsg)" /><path d="M36 14 C21.5 14 11 23 11 34.5 C11 41.5 15 47.5 21.5 51 C21 54 19.5 56.5 17 58.5 C22 58.5 26 57 29 54.2 C31.2 54.7 33.5 55 36 55 C50.5 55 61 46 61 34.5 C61 23 50.5 14 36 14 Z" fill="url(#gBub)"/></svg><svg class="a" style="left:475.2px;top:1443.5px;filter:drop-shadow(0 1px 1.5px rgba(0,0,0,.28));" width="72" height="72" viewBox="0 0 72 72"><rect x="1" y="1" width="70" height="70" rx="16" fill="url(#gMail)" /><rect x="11.5" y="21" width="49" height="31" rx="4" fill="#f7f8fa"/><path d="M12.5 23 L33 40 Q36 42.3 39 40 L59.5 23" fill="none" stroke="#b9c0cc" stroke-width="2"/><path d="M12.5 50.5 L29 36.5 M59.5 50.5 L43 36.5" stroke="#cfd4dc" stroke-width="1.6"/></svg><svg class="a" style="left:570.2px;top:1443.5px;filter:drop-shadow(0 1px 1.5px rgba(0,0,0,.28));" width="72" height="72" viewBox="0 0 72 72"><g clip-path="url(#cpI)"><rect x="1" y="1" width="70" height="70" rx="16" fill="#ece8dc" /><circle cx="71" cy="1" r="63" fill="#f7d94c"/><circle cx="71" cy="1" r="55" fill="#a9dd7c"/><circle cx="71" cy="1" r="40" fill="#f6f4ec"/><circle cx="71" cy="1" r="25" fill="#9de072"/><path d="M1 14 L30 27 V36 L1 23 Z" fill="#f7d94c"/><rect x="1" y="1" width="10" height="70" fill="#f6c3cd"/><rect x="10" y="1" width="17" height="70" fill="#fbfaf6"/><rect x="26.5" y="1" width="1" height="70" fill="#c9c6bc"/><rect x="10" y="48" width="1" height="23" fill="#d9c9cc"/><rect x="14" y="-2" width="8" height="42" fill="#1f8af0"/><circle cx="18" cy="43" r="11.5" fill="#fff"/><circle cx="18" cy="43" r="7.3" fill="#1f7fe8"/><path d="M52 71 L71 58 V66 L64 71 Z" fill="#f7d94c"/></g><path d="M41.5 48.5 C46 50 50 49.5 54.5 47 C59 49.5 63 50 67.5 48.5 C70 58 66 65 54.5 69.5 C43 65 39 58 41.5 48.5 Z" fill="#2467cc" stroke="#fff" stroke-width="1.6"/><path d="M43 50 C47 51.3 50.5 50.8 54.5 48.8 C58.5 50.8 62 51.3 66 50 L66.4 53.5 H42.6 Z" fill="#e03a3a"/><path d="M42.5 54 H66.5" stroke="#fff" stroke-width="1.2"/><text x="54.5" y="64" font-family="Liberation Sans" font-weight="700" font-size="10" fill="#fff" text-anchor="middle">280</text></svg><svg class="a" style="left:665.2px;top:1443.5px;filter:drop-shadow(0 1px 1.5px rgba(0,0,0,.28));" width="72" height="72" viewBox="0 0 72 72"><rect x="1" y="1" width="70" height="70" rx="16" fill="url(#gWhite)" /><ellipse cx="36" cy="20" rx="9.3" ry="15" fill="#3f9bd9" opacity=".86" transform="rotate(180 36 36)"/><ellipse cx="36" cy="20" rx="9.3" ry="15" fill="#4a78d8" opacity=".86" transform="rotate(225 36 36)"/><ellipse cx="36" cy="20" rx="9.3" ry="15" fill="#9b68c8" opacity=".86" transform="rotate(270 36 36)"/><ellipse cx="36" cy="20" rx="9.3" ry="15" fill="#4db85e" opacity=".86" transform="rotate(135 36 36)"/><ellipse cx="36" cy="20" rx="9.3" ry="15" fill="#8cc63e" opacity=".86" transform="rotate(90 36 36)"/><ellipse cx="36" cy="20" rx="9.3" ry="15" fill="#ef4136" opacity=".86" transform="rotate(315 36 36)"/><ellipse cx="36" cy="20" rx="9.3" ry="15" fill="#f3d51c" opacity=".86" transform="rotate(45 36 36)"/><ellipse cx="36" cy="20" rx="9.3" ry="15" fill="#f9a01b" opacity=".86" transform="rotate(0 36 36)"/></svg><svg class="a" style="left:760.2px;top:1443.5px;filter:drop-shadow(0 1px 1.5px rgba(0,0,0,.28));" width="72" height="72" viewBox="0 0 72 72"><rect x="1" y="1" width="70" height="70" rx="16" fill="url(#gFt)" /><rect x="11" y="21" width="32.5" height="30" rx="7.5" fill="url(#gCam)"/><path d="M47 33 L57.5 23.5 Q60.5 21.5 60.5 25 V47 Q60.5 50.5 57.5 48.5 L47 39 Z" fill="url(#gCam)"/></svg><svg class="a" style="left:855.2px;top:1443.5px;filter:drop-shadow(0 1px 1.5px rgba(0,0,0,.28));" width="72" height="72" viewBox="0 0 72 72"><g clip-path="url(#cpI)"><rect x="1" y="1" width="70" height="70" rx="16" fill="url(#gWhite)" /><rect x="1" y="1" width="70" height="21" fill="#f2504d"/></g><text x="36" y="17.5" font-family="Liberation Sans" font-weight="700" font-size="13.5" fill="#fff" text-anchor="middle" letter-spacing=".3">DEC</text><text x="36" y="60" font-family="Liberation Sans" font-size="41" fill="#1d1d1f" text-anchor="middle">29</text></svg><svg class="a" style="left:950.2px;top:1443.5px;filter:drop-shadow(0 1px 1.5px rgba(0,0,0,.28));" width="72" height="72" viewBox="0 0 72 72"><rect x="62" y="24" width="9" height="11" rx="2" fill="#79b8e8"/><rect x="62" y="36" width="9" height="11" rx="2" fill="#f0a33a"/><rect x="62" y="48" width="9" height="11" rx="2" fill="#7fc765"/><rect x="62" y="13" width="9" height="10" rx="2" fill="#b9bcc0"/><rect x="1" y="1" width="66" height="70" rx="16" fill="url(#gCont)" /><circle cx="34" cy="35" r="21" fill="none" stroke="#8a6236" stroke-width="1.6"/><circle cx="34" cy="29" r="8" fill="#93693b"/><path d="M17.5 48 C21 38.5 47 38.5 50.5 48 A21 21 0 0 1 17.5 48 Z" fill="#93693b"/></svg><svg class="a" style="left:1045.2px;top:1443.5px;filter:drop-shadow(0 1px 1.5px rgba(0,0,0,.28));" width="72" height="72" viewBox="0 0 72 72"><rect x="1" y="1" width="70" height="70" rx="16" fill="url(#gWhite)" /><circle cx="14.5" cy="18.5" r="5.2" fill="#fff" stroke="#1f7cf2" stroke-width="1.3"/><circle cx="14.5" cy="18.5" r="3.3" fill="#1f7cf2"/><rect x="27" y="17.9" width="37" height="1.2" fill="#c9c9cc"/><circle cx="14.5" cy="36" r="5.2" fill="#fff" stroke="#e8344a" stroke-width="1.3"/><circle cx="14.5" cy="36" r="3.3" fill="#e8344a"/><rect x="27" y="35.4" width="37" height="1.2" fill="#c9c9cc"/><circle cx="14.5" cy="53.5" r="5.2" fill="#fff" stroke="#f39a1c" stroke-width="1.3"/><circle cx="14.5" cy="53.5" r="3.3" fill="#f39a1c"/><rect x="27" y="52.9" width="37" height="1.2" fill="#c9c9cc"/></svg><svg class="a" style="left:1140.2px;top:1443.5px;filter:drop-shadow(0 1px 1.5px rgba(0,0,0,.28));" width="72" height="72" viewBox="0 0 72 72"><g clip-path="url(#cpI)"><rect x="1" y="1" width="70" height="70" rx="16" fill="url(#gNotes)" /><rect x="1" y="1" width="70" height="18.5" fill="#fbcf2f"/><rect x="1" y="19.5" width="70" height="3.5" fill="#e9e7e2"/><path d="M1 36 H71 M1 48 H71 M1 60 H71" stroke="#dddbd6" stroke-width="1"/></g></svg><svg class="a" style="left:1235.2px;top:1443.5px;filter:drop-shadow(0 1px 1.5px rgba(0,0,0,.28));" width="72" height="72" viewBox="0 0 72 72"><rect x="1" y="1" width="70" height="70" rx="16" fill="url(#gTv)" /><path d="M19.7 16.1c0-3.3 2.7-4.9 2.8-5-1.5-2.2-3.9-2.5-4.8-2.6-2-.2-4 1.2-5 1.2-1 0-2.6-1.2-4.3-1.1-2.2 0-4.3 1.3-5.4 3.3-2.3 4-.6 9.9 1.7 13.2 1.1 1.6 2.4 3.4 4.1 3.3 1.7-.1 2.3-1.1 4.3-1.1s2.6 1.1 4.3 1c1.8 0 2.9-1.6 4-3.2 1.3-1.8 1.8-3.6 1.8-3.7-.1 0-3.5-1.3-3.5-5.3zM16.4 6.3c.9-1.1 1.5-2.6 1.3-4.2-1.3.1-2.9.9-3.8 2-.8 1-1.6 2.5-1.4 4 1.5.1 3-.7 3.9-1.8z" fill="#fff" transform="translate(9.5 19) scale(.95)"/><text x="47" y="46.5" font-family="Liberation Sans" font-weight="700" font-size="25" fill="#fff" text-anchor="middle">tv</text></svg><svg class="a" style="left:1330.2px;top:1443.5px;filter:drop-shadow(0 1px 1.5px rgba(0,0,0,.28));" width="72" height="72" viewBox="0 0 72 72"><rect x="1" y="1" width="70" height="70" rx="16" fill="url(#gMus)" /><path d="M27 20.5 L53 14.5 V45.5 a6.5 5.5 -20 1 1 -4 -5.2 V25 L31 29 V51 a6.5 5.5 -20 1 1 -4 -5.2 Z" fill="#fff"/></svg><svg class="a" style="left:1425.2px;top:1443.5px;filter:drop-shadow(0 1px 1.5px rgba(0,0,0,.28));" width="72" height="72" viewBox="0 0 72 72"><rect x="1" y="1" width="70" height="70" rx="16" fill="url(#gPod)" /><path d="M22 52.5 A21 21 0 1 1 50 52.5" fill="none" stroke="#fff" stroke-width="3.4" stroke-linecap="round"/><path d="M26.5 44.5 A13 13 0 1 1 45.5 44.5" fill="none" stroke="#fff" stroke-width="3.4" stroke-linecap="round"/><circle cx="36" cy="34" r="5.3" fill="#fff"/><path d="M31.5 45.5 Q31.5 41.5 36 41.5 Q40.5 41.5 40.5 45.5 L39 58 Q38.6 61 36 61 Q33.4 61 33 58 Z" fill="#fff"/></svg><svg class="a" style="left:1520.2px;top:1443.5px;filter:drop-shadow(0 1px 1.5px rgba(0,0,0,.28));" width="72" height="72" viewBox="0 0 72 72"><g clip-path="url(#cpI)"><rect x="1" y="1" width="70" height="70" rx="16" fill="url(#gWhite)" /></g><path d="M16 16 H31 L56 45 V56 H41 L16 27 Z" fill="#f8395a"/><path d="M37 16 H56 V38 Z" fill="#e22c4c"/><path d="M16 34 V56 H35 Z" fill="#e22c4c"/></svg><svg class="a" style="left:1615.2px;top:1443.5px;filter:drop-shadow(0 1px 1.5px rgba(0,0,0,.28));" width="72" height="72" viewBox="0 0 72 72"><rect x="1" y="1" width="70" height="70" rx="16" fill="url(#gApp)" /><path d="M36 19 L20 47" stroke="#fff" stroke-width="5.2" stroke-linecap="round" fill="none"/><path d="M31.5 14.5 L50.5 47" stroke="#fff" stroke-width="5.2" stroke-linecap="round" fill="none"/><path d="M40.5 14.5 L37.5 19.5" stroke="#fff" stroke-width="5.2" stroke-linecap="round" fill="none"/><path d="M12.5 43.5 H40 M47 43.5 H59.5" stroke="#fff" stroke-width="5.2" stroke-linecap="round" fill="none"/><path d="M19.5 51.5 L17.5 55" stroke="#fff" stroke-width="5.2" stroke-linecap="round" fill="none"/></svg><svg class="a" style="left:1710.2px;top:1443.5px;filter:drop-shadow(0 1px 1.5px rgba(0,0,0,.28));" width="72" height="72" viewBox="0 0 72 72"><rect x="2" y="3" width="68" height="66" rx="14" fill="#111" stroke="#3b3b3d" stroke-width="2.6"/><rect x="6" y="7" width="60" height="58" rx="10" fill="#1e1e1f"/><path d="M13 16.5 L20 20.5 L13 24.5" fill="none" stroke="#fff" stroke-width="2"/><rect x="23" y="25" width="9" height="2" fill="#fff"/></svg><svg class="a" style="left:1805.2px;top:1443.5px;filter:drop-shadow(0 1px 1.5px rgba(0,0,0,.28));" width="72" height="72" viewBox="0 0 72 72"><rect x="1" y="1" width="70" height="70" rx="16" fill="url(#gPref)" /><circle cx="36" cy="36" r="30" fill="#3c3e42"/><path d="M62 36L66.5 36M61.6 40.5L66 41.3M60.4 44.9L64.7 46.4M58.5 49L62.4 51.2M55.9 52.7L59.4 55.6M52.7 55.9L55.6 59.4M49 58.5L51.2 62.4M44.9 60.4L46.4 64.7M40.5 61.6L41.3 66M36 62L36 66.5M31.5 61.6L30.7 66M27.1 60.4L25.6 64.7M23 58.5L20.8 62.4M19.3 55.9L16.4 59.4M16.1 52.7L12.6 55.6M13.5 49L9.6 51.2M11.6 44.9L7.3 46.4M10.4 40.5L6 41.3M10 36L5.5 36M10.4 31.5L6 30.7M11.6 27.1L7.3 25.6M13.5 23L9.6 20.7M16.1 19.3L12.6 16.4M19.3 16.1L16.4 12.6M23 13.5L20.7 9.6M27.1 11.6L25.6 7.3M31.5 10.4L30.7 6M36 10L36 5.5M40.5 10.4L41.3 6M44.9 11.6L46.4 7.3M49 13.5L51.2 9.6M52.7 16.1L55.6 12.6M55.9 19.3L59.4 16.4M58.5 23L62.4 20.7M60.4 27.1L64.7 25.6M61.6 31.5L66 30.7" stroke="#9da0a5" stroke-width="2.8"/><circle cx="36" cy="36" r="25" fill="#7f8287"/><circle cx="36" cy="36" r="20.5" fill="#55585d"/><circle cx="36" cy="36" r="5" fill="#c6c8cc"/><path d="M36 36 L36 56" stroke="#c6c8cc" stroke-width="3.4"/><path d="M36 36 L18.7 26" stroke="#c6c8cc" stroke-width="3.4"/><path d="M36 36 L53.3 26" stroke="#c6c8cc" stroke-width="3.4"/><circle cx="36" cy="36" r="20.5" fill="none" stroke="#c6c8cc" stroke-width="2.6"/></svg><svg class="a" style="left:1900.2px;top:1443.5px;filter:drop-shadow(0 1px 1.5px rgba(0,0,0,.28));" width="72" height="72" viewBox="0 0 72 72"><circle cx="36" cy="36" r="39" fill="#fff"/><circle cx="36" cy="36" r="36.3" fill="url(#gMt)"/><clipPath id="cpM"><circle cx="36" cy="36" r="36.3"/></clipPath><g clip-path="url(#cpM)"><rect x="-2" y="47.5" width="76" height="3" fill="#fff"/><rect x="-2" y="50.5" width="76" height="24" fill="#5aa2dd" opacity=".55"/></g><path d="M9 47 L23.5 23 L31.5 36.5 M27 47 L44 14.5 L63 47" fill="none" stroke="#fff" stroke-width="3.6" stroke-linejoin="miter"/></svg><svg class="a" style="left:1995.2px;top:1443.5px;filter:drop-shadow(0 1px 1.5px rgba(0,0,0,.28));" width="72" height="72" viewBox="0 0 72 72"><rect x="2" y="3" width="68" height="68" rx="17" fill="url(#gOr)" stroke="#f5c8a6" stroke-width="1.3"/><path d="M13 18 a3 3 0 0 1 3 -3 h11 a3 3 0 0 1 2.5 1.3 l3 4.2 h-8 a4 4 0 0 0 -4 4 v29 h-4.5 a3 3 0 0 1 -3 -3 Z" fill="#fdf3ea"/><rect x="22" y="22.5" width="38" height="33" rx="3.5" fill="none" stroke="#fdf3ea" stroke-width="3.6"/><path d="M13 53.5 H24" stroke="#fdf3ea" stroke-width="3.6"/><rect x="32" y="33.5" width="19" height="3.2" rx="1" fill="#fdf3ea"/><rect x="32" y="40.5" width="19" height="3.2" rx="1" fill="#fdf3ea"/></svg><div class="a" style="left:128px;top:1532px;width:8px;height:8px;border-radius:50%;background:#3e3e3e;"></div><div class="a" style="left:2028px;top:1532px;width:8px;height:8px;border-radius:50%;background:#3e3e3e;"></div><div class="a" style="left:2102.3px;top:1442px;width:1.6px;height:86px;background:#8f8f8f;"></div><svg class="a" style="left:2128.5px;top:1444.5px;filter:drop-shadow(0 1px 1.5px rgba(0,0,0,.25));" width="83" height="71" viewBox="0 0 83 71"><path d="M1 8 a5 5 0 0 1 5 -5 h19 a6 6 0 0 1 4 1.6 l3.5 3.4 a6 6 0 0 0 4 1.6 h40.5 a5 5 0 0 1 5 5 v8 H1 Z" fill="#3aa0e4"/><rect x="1" y="14.5" width="81" height="54" rx="5" fill="url(#gDl)"/><rect x="1" y="65.5" width="81" height="3" rx="1.5" fill="#4aa9ea"/><circle cx="41.5" cy="41" r="15" fill="#47a9ea"/><path d="M41.5 32.5 V48 M35.5 42.5 L41.5 48.5 L47.5 42.5" fill="none" stroke="#7fd0fb" stroke-width="2.4" stroke-linecap="round" stroke-linejoin="round"/></svg><svg class="a" style="left:2234px;top:1440.5px;filter:drop-shadow(0 1px 2px rgba(0,0,0,.2));" width="64" height="79" viewBox="0 0 64 79"><path d="M1.5 7.5 L10 71 Q10.5 77 18 77.5 H46 Q53.5 77 54 71 L62.5 7.5 Z" fill="url(#gTrash)" opacity=".93"/><ellipse cx="32" cy="7.5" rx="30.5" ry="6.5" fill="#e9e9eb" stroke="#f6f6f7" stroke-width="2"/><ellipse cx="32" cy="8.5" rx="26" ry="4.2" fill="#dcdde0"/></svg></body></html>
